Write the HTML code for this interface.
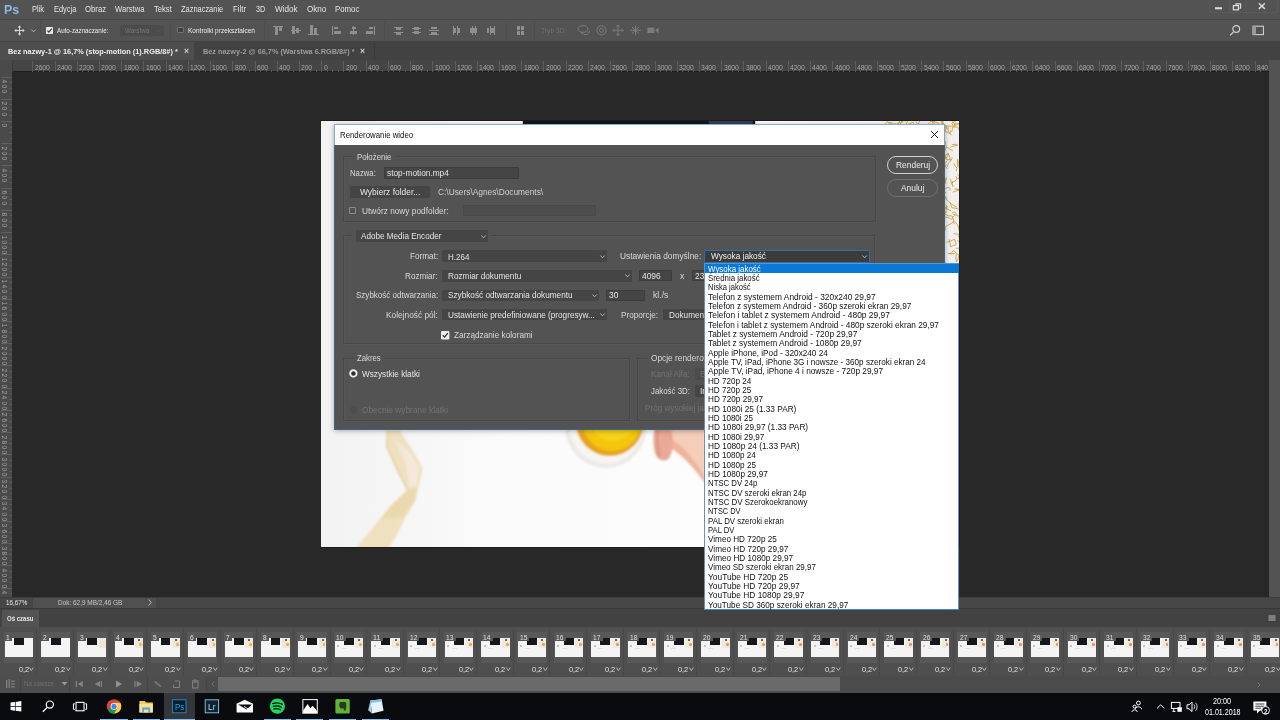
<!DOCTYPE html>
<html><head><meta charset="utf-8"><title>Photoshop</title>
<style>
html,body{margin:0;padding:0;}
body{width:1280px;height:720px;overflow:hidden;background:#282828;position:relative;font-family:"Liberation Sans",sans-serif;}
#app{position:absolute;left:0;top:0;width:1280px;height:720px;overflow:hidden;will-change:transform;}
.t{position:absolute;white-space:nowrap;line-height:12px;height:12px;font-family:"Liberation Sans",sans-serif;transform-origin:0 50%;}
.r{position:absolute;box-sizing:border-box;}
svg{position:absolute;overflow:visible;}
</style></head><body><div id="app">
<div class="r" style="left:0.00px;top:0.00px;width:1280.00px;height:720.00px;background:#282828;"></div>
<div class="r" style="left:0.00px;top:0.00px;width:1280.00px;height:19.00px;background:#535353;"></div>
<span class="t" style="left:4.20px;top:4px;font-size:12.5px;color:#8fb7e6;font-weight:bold;transform:scaleX(0.9876);">Ps</span>
<span class="t" style="left:31.80px;top:3px;font-size:8.6px;color:#e4e4e4;transform:scaleX(0.8731);">Plik</span>
<span class="t" style="left:53.70px;top:3px;font-size:8.6px;color:#e4e4e4;transform:scaleX(0.8639);">Edycja</span>
<span class="t" style="left:84.60px;top:3px;font-size:8.6px;color:#e4e4e4;transform:scaleX(0.9010);">Obraz</span>
<span class="t" style="left:115.20px;top:3px;font-size:8.6px;color:#e4e4e4;transform:scaleX(0.8875);">Warstwa</span>
<span class="t" style="left:153.50px;top:3px;font-size:8.6px;color:#e4e4e4;transform:scaleX(0.8868);">Tekst</span>
<span class="t" style="left:181.10px;top:3px;font-size:8.6px;color:#e4e4e4;transform:scaleX(0.8654);">Zaznaczanie</span>
<span class="t" style="left:233.10px;top:3px;font-size:8.6px;color:#e4e4e4;transform:scaleX(0.9073);">Filtr</span>
<span class="t" style="left:255.90px;top:3px;font-size:8.6px;color:#e4e4e4;transform:scaleX(0.8368);">3D</span>
<span class="t" style="left:274.60px;top:3px;font-size:8.6px;color:#e4e4e4;transform:scaleX(0.9458);">Widok</span>
<span class="t" style="left:306.70px;top:3px;font-size:8.6px;color:#e4e4e4;transform:scaleX(0.9389);">Okno</span>
<span class="t" style="left:334.90px;top:3px;font-size:8.6px;color:#e4e4e4;transform:scaleX(0.9116);">Pomoc</span>
<svg style="left:1200px;top:0" width="80" height="19" viewBox="0 0 80 19"><path d="M9.4 0 V10.5 Q9.4 12.5 11.4 12.5 H75.8 Q77.8 12.5 77.8 10.5 V0 M29.4 0 V12.5 M46 0 V12.5" fill="none" stroke="#5e5e5e" stroke-width="0.7"/><rect x="15" y="7.2" width="7" height="2.1" fill="#d9d9d9"/><rect x="33.4" y="5.6" width="5" height="4.2" fill="none" stroke="#d9d9d9" stroke-width="1.3"/><path d="M36 4.9 V3.9 H40.6 V8.2 H39.4" fill="none" stroke="#d9d9d9" stroke-width="1.2"/><path d="M58.8 3.3 L64.9 8.9 M64.9 3.3 L58.8 8.9" stroke="#d9d9d9" stroke-width="1.5" fill="none"/></svg>
<div class="r" style="left:0.00px;top:19.00px;width:1280.00px;height:22.30px;background:#535353;"></div>
<div class="r" style="left:0.00px;top:18.60px;width:1280.00px;height:1.00px;background:#474747;"></div>
<div class="r" style="left:0.00px;top:40.60px;width:1280.00px;height:1.00px;background:#3d3d3d;"></div>
<svg style="left:14px;top:24.8px" width="11" height="11" viewBox="0 0 11 11"><path d="M5.5 0.3 L7.3 2.4 H6 V5 H8.6 V3.7 L10.7 5.5 L8.6 7.3 V6 H6 V8.6 H7.3 L5.5 10.7 L3.7 8.6 H5 V6 H2.4 V7.3 L0.3 5.5 L2.4 3.7 V5 H5 V2.4 H3.7 Z" fill="#d8d8d8"/></svg>
<svg style="left:30.8px;top:29px" width="5" height="4" viewBox="0 0 5 4"><path d="M0.3 0.6 L2.5 2.9 L4.7 0.6" fill="none" stroke="#bdbdbd" stroke-width="0.9"/></svg>
<div class="r" style="left:40.20px;top:22.00px;width:1.00px;height:17.00px;background:#4c4c4c;"></div>
<svg style="left:46.2px;top:26.6px" width="7" height="7" viewBox="0 0 7 7"><rect width="7" height="7" rx="0.8" fill="#e8e8e8"/><path d="M1.4 3.6 L2.9 5.1 L5.7 1.7" fill="none" stroke="#333" stroke-width="1.2"/></svg>
<span class="t" style="left:57.00px;top:25px;font-size:7.8px;color:#ececec;transform:scaleX(0.8010);">Auto-zaznaczanie:</span>
<div class="r" style="left:120.00px;top:24.50px;width:44.00px;height:11.80px;background:#4b4b4b;border-radius:1px;"></div>
<span class="t" style="left:125.00px;top:25px;font-size:7.6px;color:#777;transform:scaleX(0.8300);">Warstwa</span>
<svg style="left:155.5px;top:29px" width="5" height="4" viewBox="0 0 5 4"><path d="M0.3 0.6 L2.5 2.9 L4.7 0.6" fill="none" stroke="#5e5e5e" stroke-width="0.9"/></svg>
<div class="r" style="left:170.40px;top:22.00px;width:1.00px;height:17.00px;background:#4c4c4c;"></div>
<div class="r" style="left:177.30px;top:26.80px;width:6.60px;height:6.60px;background:#404040;border:0.8px solid #727272;border-radius:1px;"></div>
<span class="t" style="left:187.60px;top:25px;font-size:7.8px;color:#ececec;transform:scaleX(0.8341);">Kontrolki przekształceń</span>
<div class="r" style="left:264.20px;top:22.00px;width:1.00px;height:17.00px;background:#4c4c4c;"></div>
<div class="r" style="left:273.40px;top:25.70px;width:10.10px;height:0.90px;background:#8f8f8f;"></div>
<div class="r" style="left:275.00px;top:26.90px;width:3.20px;height:7.80px;background:#8f8f8f;"></div>
<div class="r" style="left:279.40px;top:26.90px;width:2.80px;height:4.60px;background:#8f8f8f;"></div>
<div class="r" style="left:290.60px;top:29.90px;width:10.40px;height:0.80px;background:#8f8f8f;"></div>
<div class="r" style="left:292.20px;top:26.30px;width:3.00px;height:8.20px;background:#8f8f8f;"></div>
<div class="r" style="left:296.40px;top:27.90px;width:2.80px;height:5.00px;background:#8f8f8f;"></div>
<div class="r" style="left:308.20px;top:33.90px;width:10.40px;height:0.80px;background:#8f8f8f;"></div>
<div class="r" style="left:310.20px;top:25.30px;width:2.80px;height:8.40px;background:#8f8f8f;"></div>
<div class="r" style="left:314.20px;top:28.30px;width:2.80px;height:5.40px;background:#8f8f8f;"></div>
<div class="r" style="left:332.20px;top:25.70px;width:1.00px;height:9.20px;background:#8f8f8f;"></div>
<div class="r" style="left:333.60px;top:26.90px;width:4.20px;height:2.50px;background:#8f8f8f;"></div>
<div class="r" style="left:333.60px;top:31.20px;width:7.10px;height:2.50px;background:#8f8f8f;"></div>
<div class="r" style="left:353.30px;top:25.70px;width:1.00px;height:9.20px;background:#8f8f8f;"></div>
<div class="r" style="left:351.60px;top:26.90px;width:4.40px;height:2.50px;background:#8f8f8f;"></div>
<div class="r" style="left:350.20px;top:31.20px;width:7.20px;height:2.50px;background:#8f8f8f;"></div>
<div class="r" style="left:373.80px;top:25.70px;width:1.00px;height:9.20px;background:#8f8f8f;"></div>
<div class="r" style="left:369.20px;top:26.90px;width:4.20px;height:2.50px;background:#8f8f8f;"></div>
<div class="r" style="left:365.60px;top:31.20px;width:7.80px;height:2.50px;background:#8f8f8f;"></div>
<div class="r" style="left:393.50px;top:26.70px;width:9.90px;height:0.80px;background:#8f8f8f;"></div>
<div class="r" style="left:393.50px;top:31.50px;width:9.90px;height:0.80px;background:#8f8f8f;"></div>
<div class="r" style="left:395.90px;top:27.70px;width:5.10px;height:2.20px;background:#8f8f8f;"></div>
<div class="r" style="left:395.90px;top:32.50px;width:5.10px;height:2.00px;background:#8f8f8f;"></div>
<div class="r" style="left:411.60px;top:27.90px;width:9.80px;height:0.80px;background:#8f8f8f;"></div>
<div class="r" style="left:411.60px;top:32.30px;width:9.80px;height:0.80px;background:#8f8f8f;"></div>
<div class="r" style="left:414.00px;top:26.50px;width:5.00px;height:3.40px;background:#8f8f8f;"></div>
<div class="r" style="left:414.00px;top:31.10px;width:5.00px;height:3.40px;background:#8f8f8f;"></div>
<div class="r" style="left:429.00px;top:29.70px;width:10.10px;height:0.80px;background:#8f8f8f;"></div>
<div class="r" style="left:429.00px;top:33.90px;width:10.10px;height:0.80px;background:#8f8f8f;"></div>
<div class="r" style="left:431.40px;top:27.30px;width:5.30px;height:2.20px;background:#8f8f8f;"></div>
<div class="r" style="left:431.40px;top:31.50px;width:5.30px;height:2.20px;background:#8f8f8f;"></div>
<div class="r" style="left:452.90px;top:25.90px;width:0.90px;height:8.80px;background:#8f8f8f;"></div>
<div class="r" style="left:457.30px;top:25.90px;width:0.90px;height:8.80px;background:#8f8f8f;"></div>
<div class="r" style="left:454.00px;top:27.70px;width:2.30px;height:5.20px;background:#8f8f8f;"></div>
<div class="r" style="left:458.40px;top:27.70px;width:1.70px;height:5.20px;background:#8f8f8f;"></div>
<div class="r" style="left:471.60px;top:25.90px;width:0.90px;height:8.80px;background:#8f8f8f;"></div>
<div class="r" style="left:475.40px;top:25.90px;width:0.90px;height:8.80px;background:#8f8f8f;"></div>
<div class="r" style="left:470.00px;top:27.70px;width:3.60px;height:5.20px;background:#8f8f8f;"></div>
<div class="r" style="left:474.40px;top:27.70px;width:2.80px;height:5.20px;background:#8f8f8f;"></div>
<div class="r" style="left:489.60px;top:25.90px;width:0.90px;height:8.80px;background:#8f8f8f;"></div>
<div class="r" style="left:494.00px;top:25.90px;width:0.90px;height:8.80px;background:#8f8f8f;"></div>
<div class="r" style="left:487.00px;top:27.70px;width:2.40px;height:5.20px;background:#8f8f8f;"></div>
<div class="r" style="left:491.20px;top:27.70px;width:2.60px;height:5.20px;background:#8f8f8f;"></div>
<div class="r" style="left:516.60px;top:25.90px;width:3.20px;height:3.80px;background:#8f8f8f;"></div>
<div class="r" style="left:520.80px;top:25.90px;width:3.30px;height:3.80px;background:#8f8f8f;"></div>
<div class="r" style="left:516.60px;top:30.70px;width:3.20px;height:4.00px;background:#8f8f8f;"></div>
<div class="r" style="left:520.80px;top:30.70px;width:3.30px;height:4.00px;background:#8f8f8f;"></div>
<div class="r" style="left:384.30px;top:22.00px;width:1.00px;height:17.00px;background:#4c4c4c;"></div>
<div class="r" style="left:505.60px;top:22.00px;width:1.00px;height:17.00px;background:#4c4c4c;"></div>
<div class="r" style="left:533.60px;top:22.00px;width:1.00px;height:17.00px;background:#4c4c4c;"></div>
<span class="t" style="left:541.20px;top:25px;font-size:7.6px;color:#707070;transform:scaleX(0.8871);">Tryb 3D:</span>
<svg style="left:576px;top:23px" width="86" height="15" viewBox="0 0 86 15"><g fill="none" stroke="#7c7c7c" stroke-width="1"><ellipse cx="7" cy="6" rx="5" ry="3.4"/><path d="M5 9.5 C8 13 13 12 13.5 8"/><circle cx="25.5" cy="7.3" r="4.6"/><circle cx="25.5" cy="7.3" r="2"/><path d="M42 2 V12.6 M36.8 7.3 H47.4 M40.4 3.6 L42 2 L43.6 3.6 M40.4 11 L42 12.6 L43.6 11 M38.4 5.7 L36.8 7.3 L38.4 8.9 M45.8 5.7 L47.4 7.3 L45.8 8.9"/><path d="M59.5 2.5 V12 M54 7.3 H65 M56 4 L63 10.6 M63 4 L56 10.6"/></g><rect x="71.4" y="4.6" width="7" height="5.4" fill="#7c7c7c"/><path d="M79 7.3 L82.6 4.4 V10.2 Z" fill="#7c7c7c"/></svg>
<svg style="left:1228px;top:23px" width="40" height="15" viewBox="0 0 40 15"><circle cx="8.2" cy="6" r="3.4" fill="none" stroke="#cfcfcf" stroke-width="1.2"/><path d="M5.8 8.6 L2.2 12.2" stroke="#cfcfcf" stroke-width="1.3"/><rect x="25" y="3.2" width="10.4" height="8.4" fill="none" stroke="#cfcfcf" stroke-width="1.1"/><rect x="25" y="3.2" width="3" height="8.4" fill="#9a9a9a"/></svg>
<div class="r" style="left:0.00px;top:41.40px;width:1280.00px;height:18.80px;background:#424242;"></div>
<div class="r" style="left:0.00px;top:42.00px;width:194.40px;height:18.20px;background:#4e4e4e;"></div>
<span class="t" style="left:7.50px;top:46px;font-size:7.4px;color:#efefef;font-weight:bold;transform:scaleX(0.9949);">Bez nazwy-1 @ 16,7% (stop-motion (1).RGB/8#) *</span>
<span class="t" style="left:183.60px;top:45px;font-size:8.5px;color:#cfcfcf;font-weight:bold;transform:scaleX(1.0073);">×</span>
<span class="t" style="left:203.00px;top:46px;font-size:7.4px;color:#9c9c9c;font-weight:bold;transform:scaleX(0.9892);">Bez nazwy-2 @ 66,7% (Warstwa 6.RGB/8#) *</span>
<span class="t" style="left:360.00px;top:45px;font-size:8.5px;color:#cfcfcf;font-weight:bold;transform:scaleX(1.0073);">×</span>
<div class="r" style="left:373.60px;top:43.00px;width:0.80px;height:17.00px;background:#3a3a3a;"></div>
<div class="r" style="left:0.00px;top:60.20px;width:1280.00px;height:11.80px;background:#454545;"></div>
<div class="r" style="left:0.00px;top:72.00px;width:12.20px;height:525.00px;background:#4a4a4a;"></div>
<div class="r" style="left:1268.60px;top:60.20px;width:11.40px;height:536.80px;background:#535353;"></div>
<div class="r" style="left:12.20px;top:71.40px;width:1256.40px;height:0.80px;background:#1e1e1e;"></div>
<div class="r" style="left:32.31px;top:60.60px;width:0.80px;height:11.00px;background:#5c5c5c;"></div>
<div class="r" style="left:37.87px;top:69.60px;width:0.70px;height:2.00px;background:#585858;"></div>
<div class="r" style="left:43.42px;top:69.00px;width:0.70px;height:2.60px;background:#585858;"></div>
<div class="r" style="left:48.98px;top:69.60px;width:0.70px;height:2.00px;background:#585858;"></div>
<span class="t" style="left:34.71px;top:62px;font-size:7.0px;color:#a6a6a6;transform:scaleX(0.9700);letter-spacing:-0.1px;">2600</span>
<div class="r" style="left:54.54px;top:60.60px;width:0.80px;height:11.00px;background:#5c5c5c;"></div>
<div class="r" style="left:60.09px;top:69.60px;width:0.70px;height:2.00px;background:#585858;"></div>
<div class="r" style="left:65.65px;top:69.00px;width:0.70px;height:2.60px;background:#585858;"></div>
<div class="r" style="left:71.20px;top:69.60px;width:0.70px;height:2.00px;background:#585858;"></div>
<span class="t" style="left:56.94px;top:62px;font-size:7.0px;color:#a6a6a6;transform:scaleX(0.9700);letter-spacing:-0.1px;">2400</span>
<div class="r" style="left:76.76px;top:60.60px;width:0.80px;height:11.00px;background:#5c5c5c;"></div>
<div class="r" style="left:82.31px;top:69.60px;width:0.70px;height:2.00px;background:#585858;"></div>
<div class="r" style="left:87.87px;top:69.00px;width:0.70px;height:2.60px;background:#585858;"></div>
<div class="r" style="left:93.42px;top:69.60px;width:0.70px;height:2.00px;background:#585858;"></div>
<span class="t" style="left:79.16px;top:62px;font-size:7.0px;color:#a6a6a6;transform:scaleX(0.9700);letter-spacing:-0.1px;">2200</span>
<div class="r" style="left:98.98px;top:60.60px;width:0.80px;height:11.00px;background:#5c5c5c;"></div>
<div class="r" style="left:104.54px;top:69.60px;width:0.70px;height:2.00px;background:#585858;"></div>
<div class="r" style="left:110.09px;top:69.00px;width:0.70px;height:2.60px;background:#585858;"></div>
<div class="r" style="left:115.65px;top:69.60px;width:0.70px;height:2.00px;background:#585858;"></div>
<span class="t" style="left:101.38px;top:62px;font-size:7.0px;color:#a6a6a6;transform:scaleX(0.9700);letter-spacing:-0.1px;">2000</span>
<div class="r" style="left:121.20px;top:60.60px;width:0.80px;height:11.00px;background:#5c5c5c;"></div>
<div class="r" style="left:126.76px;top:69.60px;width:0.70px;height:2.00px;background:#585858;"></div>
<div class="r" style="left:132.31px;top:69.00px;width:0.70px;height:2.60px;background:#585858;"></div>
<div class="r" style="left:137.87px;top:69.60px;width:0.70px;height:2.00px;background:#585858;"></div>
<span class="t" style="left:123.60px;top:62px;font-size:7.0px;color:#a6a6a6;transform:scaleX(0.9700);letter-spacing:-0.1px;">1800</span>
<div class="r" style="left:143.42px;top:60.60px;width:0.80px;height:11.00px;background:#5c5c5c;"></div>
<div class="r" style="left:148.98px;top:69.60px;width:0.70px;height:2.00px;background:#585858;"></div>
<div class="r" style="left:154.53px;top:69.00px;width:0.70px;height:2.60px;background:#585858;"></div>
<div class="r" style="left:160.09px;top:69.60px;width:0.70px;height:2.00px;background:#585858;"></div>
<span class="t" style="left:145.82px;top:62px;font-size:7.0px;color:#a6a6a6;transform:scaleX(0.9700);letter-spacing:-0.1px;">1600</span>
<div class="r" style="left:165.65px;top:60.60px;width:0.80px;height:11.00px;background:#5c5c5c;"></div>
<div class="r" style="left:171.20px;top:69.60px;width:0.70px;height:2.00px;background:#585858;"></div>
<div class="r" style="left:176.76px;top:69.00px;width:0.70px;height:2.60px;background:#585858;"></div>
<div class="r" style="left:182.31px;top:69.60px;width:0.70px;height:2.00px;background:#585858;"></div>
<span class="t" style="left:168.05px;top:62px;font-size:7.0px;color:#a6a6a6;transform:scaleX(0.9700);letter-spacing:-0.1px;">1400</span>
<div class="r" style="left:187.87px;top:60.60px;width:0.80px;height:11.00px;background:#5c5c5c;"></div>
<div class="r" style="left:193.42px;top:69.60px;width:0.70px;height:2.00px;background:#585858;"></div>
<div class="r" style="left:198.98px;top:69.00px;width:0.70px;height:2.60px;background:#585858;"></div>
<div class="r" style="left:204.53px;top:69.60px;width:0.70px;height:2.00px;background:#585858;"></div>
<span class="t" style="left:190.27px;top:62px;font-size:7.0px;color:#a6a6a6;transform:scaleX(0.9700);letter-spacing:-0.1px;">1200</span>
<div class="r" style="left:210.09px;top:60.60px;width:0.80px;height:11.00px;background:#5c5c5c;"></div>
<div class="r" style="left:215.65px;top:69.60px;width:0.70px;height:2.00px;background:#585858;"></div>
<div class="r" style="left:221.20px;top:69.00px;width:0.70px;height:2.60px;background:#585858;"></div>
<div class="r" style="left:226.76px;top:69.60px;width:0.70px;height:2.00px;background:#585858;"></div>
<span class="t" style="left:212.49px;top:62px;font-size:7.0px;color:#a6a6a6;transform:scaleX(0.9700);letter-spacing:-0.1px;">1000</span>
<div class="r" style="left:232.31px;top:60.60px;width:0.80px;height:11.00px;background:#5c5c5c;"></div>
<div class="r" style="left:237.87px;top:69.60px;width:0.70px;height:2.00px;background:#585858;"></div>
<div class="r" style="left:243.42px;top:69.00px;width:0.70px;height:2.60px;background:#585858;"></div>
<div class="r" style="left:248.98px;top:69.60px;width:0.70px;height:2.00px;background:#585858;"></div>
<span class="t" style="left:234.71px;top:62px;font-size:7.0px;color:#a6a6a6;transform:scaleX(0.9700);letter-spacing:-0.1px;">800</span>
<div class="r" style="left:254.53px;top:60.60px;width:0.80px;height:11.00px;background:#5c5c5c;"></div>
<div class="r" style="left:260.09px;top:69.60px;width:0.70px;height:2.00px;background:#585858;"></div>
<div class="r" style="left:265.64px;top:69.00px;width:0.70px;height:2.60px;background:#585858;"></div>
<div class="r" style="left:271.20px;top:69.60px;width:0.70px;height:2.00px;background:#585858;"></div>
<span class="t" style="left:256.93px;top:62px;font-size:7.0px;color:#a6a6a6;transform:scaleX(0.9700);letter-spacing:-0.1px;">600</span>
<div class="r" style="left:276.76px;top:60.60px;width:0.80px;height:11.00px;background:#5c5c5c;"></div>
<div class="r" style="left:282.31px;top:69.60px;width:0.70px;height:2.00px;background:#585858;"></div>
<div class="r" style="left:287.87px;top:69.00px;width:0.70px;height:2.60px;background:#585858;"></div>
<div class="r" style="left:293.42px;top:69.60px;width:0.70px;height:2.00px;background:#585858;"></div>
<span class="t" style="left:279.16px;top:62px;font-size:7.0px;color:#a6a6a6;transform:scaleX(0.9700);letter-spacing:-0.1px;">400</span>
<div class="r" style="left:298.98px;top:60.60px;width:0.80px;height:11.00px;background:#5c5c5c;"></div>
<div class="r" style="left:304.53px;top:69.60px;width:0.70px;height:2.00px;background:#585858;"></div>
<div class="r" style="left:310.09px;top:69.00px;width:0.70px;height:2.60px;background:#585858;"></div>
<div class="r" style="left:315.64px;top:69.60px;width:0.70px;height:2.00px;background:#585858;"></div>
<span class="t" style="left:301.38px;top:62px;font-size:7.0px;color:#a6a6a6;transform:scaleX(0.9700);letter-spacing:-0.1px;">200</span>
<div class="r" style="left:321.20px;top:60.60px;width:0.80px;height:11.00px;background:#5c5c5c;"></div>
<div class="r" style="left:326.76px;top:69.60px;width:0.70px;height:2.00px;background:#585858;"></div>
<div class="r" style="left:332.31px;top:69.00px;width:0.70px;height:2.60px;background:#585858;"></div>
<div class="r" style="left:337.87px;top:69.60px;width:0.70px;height:2.00px;background:#585858;"></div>
<span class="t" style="left:323.60px;top:62px;font-size:7.0px;color:#a6a6a6;transform:scaleX(0.9700);letter-spacing:-0.1px;">0</span>
<div class="r" style="left:343.42px;top:60.60px;width:0.80px;height:11.00px;background:#5c5c5c;"></div>
<div class="r" style="left:348.98px;top:69.60px;width:0.70px;height:2.00px;background:#585858;"></div>
<div class="r" style="left:354.53px;top:69.00px;width:0.70px;height:2.60px;background:#585858;"></div>
<div class="r" style="left:360.09px;top:69.60px;width:0.70px;height:2.00px;background:#585858;"></div>
<span class="t" style="left:345.82px;top:62px;font-size:7.0px;color:#a6a6a6;transform:scaleX(0.9700);letter-spacing:-0.1px;">200</span>
<div class="r" style="left:365.64px;top:60.60px;width:0.80px;height:11.00px;background:#5c5c5c;"></div>
<div class="r" style="left:371.20px;top:69.60px;width:0.70px;height:2.00px;background:#585858;"></div>
<div class="r" style="left:376.75px;top:69.00px;width:0.70px;height:2.60px;background:#585858;"></div>
<div class="r" style="left:382.31px;top:69.60px;width:0.70px;height:2.00px;background:#585858;"></div>
<span class="t" style="left:368.04px;top:62px;font-size:7.0px;color:#a6a6a6;transform:scaleX(0.9700);letter-spacing:-0.1px;">400</span>
<div class="r" style="left:387.87px;top:60.60px;width:0.80px;height:11.00px;background:#5c5c5c;"></div>
<div class="r" style="left:393.42px;top:69.60px;width:0.70px;height:2.00px;background:#585858;"></div>
<div class="r" style="left:398.98px;top:69.00px;width:0.70px;height:2.60px;background:#585858;"></div>
<div class="r" style="left:404.53px;top:69.60px;width:0.70px;height:2.00px;background:#585858;"></div>
<span class="t" style="left:390.27px;top:62px;font-size:7.0px;color:#a6a6a6;transform:scaleX(0.9700);letter-spacing:-0.1px;">600</span>
<div class="r" style="left:410.09px;top:60.60px;width:0.80px;height:11.00px;background:#5c5c5c;"></div>
<div class="r" style="left:415.64px;top:69.60px;width:0.70px;height:2.00px;background:#585858;"></div>
<div class="r" style="left:421.20px;top:69.00px;width:0.70px;height:2.60px;background:#585858;"></div>
<div class="r" style="left:426.75px;top:69.60px;width:0.70px;height:2.00px;background:#585858;"></div>
<span class="t" style="left:412.49px;top:62px;font-size:7.0px;color:#a6a6a6;transform:scaleX(0.9700);letter-spacing:-0.1px;">800</span>
<div class="r" style="left:432.31px;top:60.60px;width:0.80px;height:11.00px;background:#5c5c5c;"></div>
<div class="r" style="left:437.87px;top:69.60px;width:0.70px;height:2.00px;background:#585858;"></div>
<div class="r" style="left:443.42px;top:69.00px;width:0.70px;height:2.60px;background:#585858;"></div>
<div class="r" style="left:448.98px;top:69.60px;width:0.70px;height:2.00px;background:#585858;"></div>
<span class="t" style="left:434.71px;top:62px;font-size:7.0px;color:#a6a6a6;transform:scaleX(0.9700);letter-spacing:-0.1px;">1000</span>
<div class="r" style="left:454.53px;top:60.60px;width:0.80px;height:11.00px;background:#5c5c5c;"></div>
<div class="r" style="left:460.09px;top:69.60px;width:0.70px;height:2.00px;background:#585858;"></div>
<div class="r" style="left:465.64px;top:69.00px;width:0.70px;height:2.60px;background:#585858;"></div>
<div class="r" style="left:471.20px;top:69.60px;width:0.70px;height:2.00px;background:#585858;"></div>
<span class="t" style="left:456.93px;top:62px;font-size:7.0px;color:#a6a6a6;transform:scaleX(0.9700);letter-spacing:-0.1px;">1200</span>
<div class="r" style="left:476.75px;top:60.60px;width:0.80px;height:11.00px;background:#5c5c5c;"></div>
<div class="r" style="left:482.31px;top:69.60px;width:0.70px;height:2.00px;background:#585858;"></div>
<div class="r" style="left:487.87px;top:69.00px;width:0.70px;height:2.60px;background:#585858;"></div>
<div class="r" style="left:493.42px;top:69.60px;width:0.70px;height:2.00px;background:#585858;"></div>
<span class="t" style="left:479.15px;top:62px;font-size:7.0px;color:#a6a6a6;transform:scaleX(0.9700);letter-spacing:-0.1px;">1400</span>
<div class="r" style="left:498.98px;top:60.60px;width:0.80px;height:11.00px;background:#5c5c5c;"></div>
<div class="r" style="left:504.53px;top:69.60px;width:0.70px;height:2.00px;background:#585858;"></div>
<div class="r" style="left:510.09px;top:69.00px;width:0.70px;height:2.60px;background:#585858;"></div>
<div class="r" style="left:515.64px;top:69.60px;width:0.70px;height:2.00px;background:#585858;"></div>
<span class="t" style="left:501.38px;top:62px;font-size:7.0px;color:#a6a6a6;transform:scaleX(0.9700);letter-spacing:-0.1px;">1600</span>
<div class="r" style="left:521.20px;top:60.60px;width:0.80px;height:11.00px;background:#5c5c5c;"></div>
<div class="r" style="left:526.75px;top:69.60px;width:0.70px;height:2.00px;background:#585858;"></div>
<div class="r" style="left:532.31px;top:69.00px;width:0.70px;height:2.60px;background:#585858;"></div>
<div class="r" style="left:537.86px;top:69.60px;width:0.70px;height:2.00px;background:#585858;"></div>
<span class="t" style="left:523.60px;top:62px;font-size:7.0px;color:#a6a6a6;transform:scaleX(0.9700);letter-spacing:-0.1px;">1800</span>
<div class="r" style="left:543.42px;top:60.60px;width:0.80px;height:11.00px;background:#5c5c5c;"></div>
<div class="r" style="left:548.98px;top:69.60px;width:0.70px;height:2.00px;background:#585858;"></div>
<div class="r" style="left:554.53px;top:69.00px;width:0.70px;height:2.60px;background:#585858;"></div>
<div class="r" style="left:560.09px;top:69.60px;width:0.70px;height:2.00px;background:#585858;"></div>
<span class="t" style="left:545.82px;top:62px;font-size:7.0px;color:#a6a6a6;transform:scaleX(0.9700);letter-spacing:-0.1px;">2000</span>
<div class="r" style="left:565.64px;top:60.60px;width:0.80px;height:11.00px;background:#5c5c5c;"></div>
<div class="r" style="left:571.20px;top:69.60px;width:0.70px;height:2.00px;background:#585858;"></div>
<div class="r" style="left:576.75px;top:69.00px;width:0.70px;height:2.60px;background:#585858;"></div>
<div class="r" style="left:582.31px;top:69.60px;width:0.70px;height:2.00px;background:#585858;"></div>
<span class="t" style="left:568.04px;top:62px;font-size:7.0px;color:#a6a6a6;transform:scaleX(0.9700);letter-spacing:-0.1px;">2200</span>
<div class="r" style="left:587.86px;top:60.60px;width:0.80px;height:11.00px;background:#5c5c5c;"></div>
<div class="r" style="left:593.42px;top:69.60px;width:0.70px;height:2.00px;background:#585858;"></div>
<div class="r" style="left:598.98px;top:69.00px;width:0.70px;height:2.60px;background:#585858;"></div>
<div class="r" style="left:604.53px;top:69.60px;width:0.70px;height:2.00px;background:#585858;"></div>
<span class="t" style="left:590.26px;top:62px;font-size:7.0px;color:#a6a6a6;transform:scaleX(0.9700);letter-spacing:-0.1px;">2400</span>
<div class="r" style="left:610.09px;top:60.60px;width:0.80px;height:11.00px;background:#5c5c5c;"></div>
<div class="r" style="left:615.64px;top:69.60px;width:0.70px;height:2.00px;background:#585858;"></div>
<div class="r" style="left:621.20px;top:69.00px;width:0.70px;height:2.60px;background:#585858;"></div>
<div class="r" style="left:626.75px;top:69.60px;width:0.70px;height:2.00px;background:#585858;"></div>
<span class="t" style="left:612.49px;top:62px;font-size:7.0px;color:#a6a6a6;transform:scaleX(0.9700);letter-spacing:-0.1px;">2600</span>
<div class="r" style="left:632.31px;top:60.60px;width:0.80px;height:11.00px;background:#5c5c5c;"></div>
<div class="r" style="left:637.86px;top:69.60px;width:0.70px;height:2.00px;background:#585858;"></div>
<div class="r" style="left:643.42px;top:69.00px;width:0.70px;height:2.60px;background:#585858;"></div>
<div class="r" style="left:648.97px;top:69.60px;width:0.70px;height:2.00px;background:#585858;"></div>
<span class="t" style="left:634.71px;top:62px;font-size:7.0px;color:#a6a6a6;transform:scaleX(0.9700);letter-spacing:-0.1px;">2800</span>
<div class="r" style="left:654.53px;top:60.60px;width:0.80px;height:11.00px;background:#5c5c5c;"></div>
<div class="r" style="left:660.09px;top:69.60px;width:0.70px;height:2.00px;background:#585858;"></div>
<div class="r" style="left:665.64px;top:69.00px;width:0.70px;height:2.60px;background:#585858;"></div>
<div class="r" style="left:671.20px;top:69.60px;width:0.70px;height:2.00px;background:#585858;"></div>
<span class="t" style="left:656.93px;top:62px;font-size:7.0px;color:#a6a6a6;transform:scaleX(0.9700);letter-spacing:-0.1px;">3000</span>
<div class="r" style="left:676.75px;top:60.60px;width:0.80px;height:11.00px;background:#5c5c5c;"></div>
<div class="r" style="left:682.31px;top:69.60px;width:0.70px;height:2.00px;background:#585858;"></div>
<div class="r" style="left:687.86px;top:69.00px;width:0.70px;height:2.60px;background:#585858;"></div>
<div class="r" style="left:693.42px;top:69.60px;width:0.70px;height:2.00px;background:#585858;"></div>
<span class="t" style="left:679.15px;top:62px;font-size:7.0px;color:#a6a6a6;transform:scaleX(0.9700);letter-spacing:-0.1px;">3200</span>
<div class="r" style="left:698.97px;top:60.60px;width:0.80px;height:11.00px;background:#5c5c5c;"></div>
<div class="r" style="left:704.53px;top:69.60px;width:0.70px;height:2.00px;background:#585858;"></div>
<div class="r" style="left:710.08px;top:69.00px;width:0.70px;height:2.60px;background:#585858;"></div>
<div class="r" style="left:715.64px;top:69.60px;width:0.70px;height:2.00px;background:#585858;"></div>
<span class="t" style="left:701.37px;top:62px;font-size:7.0px;color:#a6a6a6;transform:scaleX(0.9700);letter-spacing:-0.1px;">3400</span>
<div class="r" style="left:721.20px;top:60.60px;width:0.80px;height:11.00px;background:#5c5c5c;"></div>
<div class="r" style="left:726.75px;top:69.60px;width:0.70px;height:2.00px;background:#585858;"></div>
<div class="r" style="left:732.31px;top:69.00px;width:0.70px;height:2.60px;background:#585858;"></div>
<div class="r" style="left:737.86px;top:69.60px;width:0.70px;height:2.00px;background:#585858;"></div>
<span class="t" style="left:723.60px;top:62px;font-size:7.0px;color:#a6a6a6;transform:scaleX(0.9700);letter-spacing:-0.1px;">3600</span>
<div class="r" style="left:743.42px;top:60.60px;width:0.80px;height:11.00px;background:#5c5c5c;"></div>
<div class="r" style="left:748.97px;top:69.60px;width:0.70px;height:2.00px;background:#585858;"></div>
<div class="r" style="left:754.53px;top:69.00px;width:0.70px;height:2.60px;background:#585858;"></div>
<div class="r" style="left:760.08px;top:69.60px;width:0.70px;height:2.00px;background:#585858;"></div>
<span class="t" style="left:745.82px;top:62px;font-size:7.0px;color:#a6a6a6;transform:scaleX(0.9700);letter-spacing:-0.1px;">3800</span>
<div class="r" style="left:765.64px;top:60.60px;width:0.80px;height:11.00px;background:#5c5c5c;"></div>
<div class="r" style="left:771.20px;top:69.60px;width:0.70px;height:2.00px;background:#585858;"></div>
<div class="r" style="left:776.75px;top:69.00px;width:0.70px;height:2.60px;background:#585858;"></div>
<div class="r" style="left:782.31px;top:69.60px;width:0.70px;height:2.00px;background:#585858;"></div>
<span class="t" style="left:768.04px;top:62px;font-size:7.0px;color:#a6a6a6;transform:scaleX(0.9700);letter-spacing:-0.1px;">4000</span>
<div class="r" style="left:787.86px;top:60.60px;width:0.80px;height:11.00px;background:#5c5c5c;"></div>
<div class="r" style="left:793.42px;top:69.60px;width:0.70px;height:2.00px;background:#585858;"></div>
<div class="r" style="left:798.97px;top:69.00px;width:0.70px;height:2.60px;background:#585858;"></div>
<div class="r" style="left:804.53px;top:69.60px;width:0.70px;height:2.00px;background:#585858;"></div>
<span class="t" style="left:790.26px;top:62px;font-size:7.0px;color:#a6a6a6;transform:scaleX(0.9700);letter-spacing:-0.1px;">4200</span>
<div class="r" style="left:810.08px;top:60.60px;width:0.80px;height:11.00px;background:#5c5c5c;"></div>
<div class="r" style="left:815.64px;top:69.60px;width:0.70px;height:2.00px;background:#585858;"></div>
<div class="r" style="left:821.20px;top:69.00px;width:0.70px;height:2.60px;background:#585858;"></div>
<div class="r" style="left:826.75px;top:69.60px;width:0.70px;height:2.00px;background:#585858;"></div>
<span class="t" style="left:812.48px;top:62px;font-size:7.0px;color:#a6a6a6;transform:scaleX(0.9700);letter-spacing:-0.1px;">4400</span>
<div class="r" style="left:832.31px;top:60.60px;width:0.80px;height:11.00px;background:#5c5c5c;"></div>
<div class="r" style="left:837.86px;top:69.60px;width:0.70px;height:2.00px;background:#585858;"></div>
<div class="r" style="left:843.42px;top:69.00px;width:0.70px;height:2.60px;background:#585858;"></div>
<div class="r" style="left:848.97px;top:69.60px;width:0.70px;height:2.00px;background:#585858;"></div>
<span class="t" style="left:834.71px;top:62px;font-size:7.0px;color:#a6a6a6;transform:scaleX(0.9700);letter-spacing:-0.1px;">4600</span>
<div class="r" style="left:854.53px;top:60.60px;width:0.80px;height:11.00px;background:#5c5c5c;"></div>
<div class="r" style="left:860.08px;top:69.60px;width:0.70px;height:2.00px;background:#585858;"></div>
<div class="r" style="left:865.64px;top:69.00px;width:0.70px;height:2.60px;background:#585858;"></div>
<div class="r" style="left:871.19px;top:69.60px;width:0.70px;height:2.00px;background:#585858;"></div>
<span class="t" style="left:856.93px;top:62px;font-size:7.0px;color:#a6a6a6;transform:scaleX(0.9700);letter-spacing:-0.1px;">4800</span>
<div class="r" style="left:876.75px;top:60.60px;width:0.80px;height:11.00px;background:#5c5c5c;"></div>
<div class="r" style="left:882.31px;top:69.60px;width:0.70px;height:2.00px;background:#585858;"></div>
<div class="r" style="left:887.86px;top:69.00px;width:0.70px;height:2.60px;background:#585858;"></div>
<div class="r" style="left:893.42px;top:69.60px;width:0.70px;height:2.00px;background:#585858;"></div>
<span class="t" style="left:879.15px;top:62px;font-size:7.0px;color:#a6a6a6;transform:scaleX(0.9700);letter-spacing:-0.1px;">5000</span>
<div class="r" style="left:898.97px;top:60.60px;width:0.80px;height:11.00px;background:#5c5c5c;"></div>
<div class="r" style="left:904.53px;top:69.60px;width:0.70px;height:2.00px;background:#585858;"></div>
<div class="r" style="left:910.08px;top:69.00px;width:0.70px;height:2.60px;background:#585858;"></div>
<div class="r" style="left:915.64px;top:69.60px;width:0.70px;height:2.00px;background:#585858;"></div>
<span class="t" style="left:901.37px;top:62px;font-size:7.0px;color:#a6a6a6;transform:scaleX(0.9700);letter-spacing:-0.1px;">5200</span>
<div class="r" style="left:921.19px;top:60.60px;width:0.80px;height:11.00px;background:#5c5c5c;"></div>
<div class="r" style="left:926.75px;top:69.60px;width:0.70px;height:2.00px;background:#585858;"></div>
<div class="r" style="left:932.30px;top:69.00px;width:0.70px;height:2.60px;background:#585858;"></div>
<div class="r" style="left:937.86px;top:69.60px;width:0.70px;height:2.00px;background:#585858;"></div>
<span class="t" style="left:923.59px;top:62px;font-size:7.0px;color:#a6a6a6;transform:scaleX(0.9700);letter-spacing:-0.1px;">5400</span>
<div class="r" style="left:943.42px;top:60.60px;width:0.80px;height:11.00px;background:#5c5c5c;"></div>
<div class="r" style="left:948.97px;top:69.60px;width:0.70px;height:2.00px;background:#585858;"></div>
<div class="r" style="left:954.53px;top:69.00px;width:0.70px;height:2.60px;background:#585858;"></div>
<div class="r" style="left:960.08px;top:69.60px;width:0.70px;height:2.00px;background:#585858;"></div>
<span class="t" style="left:945.82px;top:62px;font-size:7.0px;color:#a6a6a6;transform:scaleX(0.9700);letter-spacing:-0.1px;">5600</span>
<div class="r" style="left:965.64px;top:60.60px;width:0.80px;height:11.00px;background:#5c5c5c;"></div>
<div class="r" style="left:971.19px;top:69.60px;width:0.70px;height:2.00px;background:#585858;"></div>
<div class="r" style="left:976.75px;top:69.00px;width:0.70px;height:2.60px;background:#585858;"></div>
<div class="r" style="left:982.30px;top:69.60px;width:0.70px;height:2.00px;background:#585858;"></div>
<span class="t" style="left:968.04px;top:62px;font-size:7.0px;color:#a6a6a6;transform:scaleX(0.9700);letter-spacing:-0.1px;">5800</span>
<div class="r" style="left:987.86px;top:60.60px;width:0.80px;height:11.00px;background:#5c5c5c;"></div>
<div class="r" style="left:993.42px;top:69.60px;width:0.70px;height:2.00px;background:#585858;"></div>
<div class="r" style="left:998.97px;top:69.00px;width:0.70px;height:2.60px;background:#585858;"></div>
<div class="r" style="left:1004.53px;top:69.60px;width:0.70px;height:2.00px;background:#585858;"></div>
<span class="t" style="left:990.26px;top:62px;font-size:7.0px;color:#a6a6a6;transform:scaleX(0.9700);letter-spacing:-0.1px;">6000</span>
<div class="r" style="left:1010.08px;top:60.60px;width:0.80px;height:11.00px;background:#5c5c5c;"></div>
<div class="r" style="left:1015.64px;top:69.60px;width:0.70px;height:2.00px;background:#585858;"></div>
<div class="r" style="left:1021.19px;top:69.00px;width:0.70px;height:2.60px;background:#585858;"></div>
<div class="r" style="left:1026.75px;top:69.60px;width:0.70px;height:2.00px;background:#585858;"></div>
<span class="t" style="left:1012.48px;top:62px;font-size:7.0px;color:#a6a6a6;transform:scaleX(0.9700);letter-spacing:-0.1px;">6200</span>
<div class="r" style="left:1032.30px;top:60.60px;width:0.80px;height:11.00px;background:#5c5c5c;"></div>
<div class="r" style="left:1037.86px;top:69.60px;width:0.70px;height:2.00px;background:#585858;"></div>
<div class="r" style="left:1043.42px;top:69.00px;width:0.70px;height:2.60px;background:#585858;"></div>
<div class="r" style="left:1048.97px;top:69.60px;width:0.70px;height:2.00px;background:#585858;"></div>
<span class="t" style="left:1034.70px;top:62px;font-size:7.0px;color:#a6a6a6;transform:scaleX(0.9700);letter-spacing:-0.1px;">6400</span>
<div class="r" style="left:1054.53px;top:60.60px;width:0.80px;height:11.00px;background:#5c5c5c;"></div>
<div class="r" style="left:1060.08px;top:69.60px;width:0.70px;height:2.00px;background:#585858;"></div>
<div class="r" style="left:1065.64px;top:69.00px;width:0.70px;height:2.60px;background:#585858;"></div>
<div class="r" style="left:1071.19px;top:69.60px;width:0.70px;height:2.00px;background:#585858;"></div>
<span class="t" style="left:1056.93px;top:62px;font-size:7.0px;color:#a6a6a6;transform:scaleX(0.9700);letter-spacing:-0.1px;">6600</span>
<div class="r" style="left:1076.75px;top:60.60px;width:0.80px;height:11.00px;background:#5c5c5c;"></div>
<div class="r" style="left:1082.30px;top:69.60px;width:0.70px;height:2.00px;background:#585858;"></div>
<div class="r" style="left:1087.86px;top:69.00px;width:0.70px;height:2.60px;background:#585858;"></div>
<div class="r" style="left:1093.41px;top:69.60px;width:0.70px;height:2.00px;background:#585858;"></div>
<span class="t" style="left:1079.15px;top:62px;font-size:7.0px;color:#a6a6a6;transform:scaleX(0.9700);letter-spacing:-0.1px;">6800</span>
<div class="r" style="left:1098.97px;top:60.60px;width:0.80px;height:11.00px;background:#5c5c5c;"></div>
<div class="r" style="left:1104.53px;top:69.60px;width:0.70px;height:2.00px;background:#585858;"></div>
<div class="r" style="left:1110.08px;top:69.00px;width:0.70px;height:2.60px;background:#585858;"></div>
<div class="r" style="left:1115.64px;top:69.60px;width:0.70px;height:2.00px;background:#585858;"></div>
<span class="t" style="left:1101.37px;top:62px;font-size:7.0px;color:#a6a6a6;transform:scaleX(0.9700);letter-spacing:-0.1px;">7000</span>
<div class="r" style="left:1121.19px;top:60.60px;width:0.80px;height:11.00px;background:#5c5c5c;"></div>
<div class="r" style="left:1126.75px;top:69.60px;width:0.70px;height:2.00px;background:#585858;"></div>
<div class="r" style="left:1132.30px;top:69.00px;width:0.70px;height:2.60px;background:#585858;"></div>
<div class="r" style="left:1137.86px;top:69.60px;width:0.70px;height:2.00px;background:#585858;"></div>
<span class="t" style="left:1123.59px;top:62px;font-size:7.0px;color:#a6a6a6;transform:scaleX(0.9700);letter-spacing:-0.1px;">7200</span>
<div class="r" style="left:1143.41px;top:60.60px;width:0.80px;height:11.00px;background:#5c5c5c;"></div>
<div class="r" style="left:1148.97px;top:69.60px;width:0.70px;height:2.00px;background:#585858;"></div>
<div class="r" style="left:1154.53px;top:69.00px;width:0.70px;height:2.60px;background:#585858;"></div>
<div class="r" style="left:1160.08px;top:69.60px;width:0.70px;height:2.00px;background:#585858;"></div>
<span class="t" style="left:1145.81px;top:62px;font-size:7.0px;color:#a6a6a6;transform:scaleX(0.9700);letter-spacing:-0.1px;">7400</span>
<div class="r" style="left:1165.64px;top:60.60px;width:0.80px;height:11.00px;background:#5c5c5c;"></div>
<div class="r" style="left:1171.19px;top:69.60px;width:0.70px;height:2.00px;background:#585858;"></div>
<div class="r" style="left:1176.75px;top:69.00px;width:0.70px;height:2.60px;background:#585858;"></div>
<div class="r" style="left:1182.30px;top:69.60px;width:0.70px;height:2.00px;background:#585858;"></div>
<span class="t" style="left:1168.04px;top:62px;font-size:7.0px;color:#a6a6a6;transform:scaleX(0.9700);letter-spacing:-0.1px;">7600</span>
<div class="r" style="left:1187.86px;top:60.60px;width:0.80px;height:11.00px;background:#5c5c5c;"></div>
<div class="r" style="left:1193.41px;top:69.60px;width:0.70px;height:2.00px;background:#585858;"></div>
<div class="r" style="left:1198.97px;top:69.00px;width:0.70px;height:2.60px;background:#585858;"></div>
<div class="r" style="left:1204.52px;top:69.60px;width:0.70px;height:2.00px;background:#585858;"></div>
<span class="t" style="left:1190.26px;top:62px;font-size:7.0px;color:#a6a6a6;transform:scaleX(0.9700);letter-spacing:-0.1px;">7800</span>
<div class="r" style="left:1210.08px;top:60.60px;width:0.80px;height:11.00px;background:#5c5c5c;"></div>
<div class="r" style="left:1215.64px;top:69.60px;width:0.70px;height:2.00px;background:#585858;"></div>
<div class="r" style="left:1221.19px;top:69.00px;width:0.70px;height:2.60px;background:#585858;"></div>
<div class="r" style="left:1226.75px;top:69.60px;width:0.70px;height:2.00px;background:#585858;"></div>
<span class="t" style="left:1212.48px;top:62px;font-size:7.0px;color:#a6a6a6;transform:scaleX(0.9700);letter-spacing:-0.1px;">8000</span>
<div class="r" style="left:1232.30px;top:60.60px;width:0.80px;height:11.00px;background:#5c5c5c;"></div>
<div class="r" style="left:1237.86px;top:69.60px;width:0.70px;height:2.00px;background:#585858;"></div>
<div class="r" style="left:1243.41px;top:69.00px;width:0.70px;height:2.60px;background:#585858;"></div>
<div class="r" style="left:1248.97px;top:69.60px;width:0.70px;height:2.00px;background:#585858;"></div>
<span class="t" style="left:1234.70px;top:62px;font-size:7.0px;color:#a6a6a6;transform:scaleX(0.9700);letter-spacing:-0.1px;">8200</span>
<div class="r" style="left:1254.52px;top:60.60px;width:0.80px;height:11.00px;background:#5c5c5c;"></div>
<div class="r" style="left:1260.08px;top:69.60px;width:0.70px;height:2.00px;background:#585858;"></div>
<span class="t" style="left:1256.92px;top:62px;font-size:7.0px;color:#a6a6a6;transform:scaleX(0.9700);letter-spacing:-0.1px;">840</span>
<div class="r" style="left:0.60px;top:76.56px;width:11.20px;height:0.80px;background:#5e5e5e;"></div>
<div class="r" style="left:9.60px;top:82.11px;width:2.20px;height:0.70px;background:#5a5a5a;"></div>
<div class="r" style="left:9.00px;top:87.67px;width:2.80px;height:0.70px;background:#5a5a5a;"></div>
<div class="r" style="left:9.60px;top:93.22px;width:2.20px;height:0.70px;background:#5a5a5a;"></div>
<span class="t" style="left:2.20px;top:76px;font-size:6.6px;color:#a4a4a4;transform:rotate(90deg);transform-origin:2.4px 6px;">4</span>
<span class="t" style="left:2.20px;top:81px;font-size:6.6px;color:#a4a4a4;transform:rotate(90deg);transform-origin:2.4px 6px;">0</span>
<span class="t" style="left:2.20px;top:86px;font-size:6.6px;color:#a4a4a4;transform:rotate(90deg);transform-origin:2.4px 6px;">0</span>
<div class="r" style="left:0.60px;top:98.78px;width:11.20px;height:0.80px;background:#5e5e5e;"></div>
<div class="r" style="left:9.60px;top:104.33px;width:2.20px;height:0.70px;background:#5a5a5a;"></div>
<div class="r" style="left:9.00px;top:109.89px;width:2.80px;height:0.70px;background:#5a5a5a;"></div>
<div class="r" style="left:9.60px;top:115.44px;width:2.20px;height:0.70px;background:#5a5a5a;"></div>
<span class="t" style="left:2.20px;top:98px;font-size:6.6px;color:#a4a4a4;transform:rotate(90deg);transform-origin:2.4px 6px;">2</span>
<span class="t" style="left:2.20px;top:103px;font-size:6.6px;color:#a4a4a4;transform:rotate(90deg);transform-origin:2.4px 6px;">0</span>
<span class="t" style="left:2.20px;top:109px;font-size:6.6px;color:#a4a4a4;transform:rotate(90deg);transform-origin:2.4px 6px;">0</span>
<div class="r" style="left:0.60px;top:121.00px;width:11.20px;height:0.80px;background:#5e5e5e;"></div>
<div class="r" style="left:9.60px;top:126.56px;width:2.20px;height:0.70px;background:#5a5a5a;"></div>
<div class="r" style="left:9.00px;top:132.11px;width:2.80px;height:0.70px;background:#5a5a5a;"></div>
<div class="r" style="left:9.60px;top:137.67px;width:2.20px;height:0.70px;background:#5a5a5a;"></div>
<span class="t" style="left:2.20px;top:120px;font-size:6.6px;color:#a4a4a4;transform:rotate(90deg);transform-origin:2.4px 6px;">0</span>
<div class="r" style="left:0.60px;top:143.22px;width:11.20px;height:0.80px;background:#5e5e5e;"></div>
<div class="r" style="left:9.60px;top:148.78px;width:2.20px;height:0.70px;background:#5a5a5a;"></div>
<div class="r" style="left:9.00px;top:154.33px;width:2.80px;height:0.70px;background:#5a5a5a;"></div>
<div class="r" style="left:9.60px;top:159.89px;width:2.20px;height:0.70px;background:#5a5a5a;"></div>
<span class="t" style="left:2.20px;top:143px;font-size:6.6px;color:#a4a4a4;transform:rotate(90deg);transform-origin:2.4px 6px;">2</span>
<span class="t" style="left:2.20px;top:148px;font-size:6.6px;color:#a4a4a4;transform:rotate(90deg);transform-origin:2.4px 6px;">0</span>
<span class="t" style="left:2.20px;top:153px;font-size:6.6px;color:#a4a4a4;transform:rotate(90deg);transform-origin:2.4px 6px;">0</span>
<div class="r" style="left:0.60px;top:165.44px;width:11.20px;height:0.80px;background:#5e5e5e;"></div>
<div class="r" style="left:9.60px;top:171.00px;width:2.20px;height:0.70px;background:#5a5a5a;"></div>
<div class="r" style="left:9.00px;top:176.56px;width:2.80px;height:0.70px;background:#5a5a5a;"></div>
<div class="r" style="left:9.60px;top:182.11px;width:2.20px;height:0.70px;background:#5a5a5a;"></div>
<span class="t" style="left:2.20px;top:165px;font-size:6.6px;color:#a4a4a4;transform:rotate(90deg);transform-origin:2.4px 6px;">4</span>
<span class="t" style="left:2.20px;top:170px;font-size:6.6px;color:#a4a4a4;transform:rotate(90deg);transform-origin:2.4px 6px;">0</span>
<span class="t" style="left:2.20px;top:175px;font-size:6.6px;color:#a4a4a4;transform:rotate(90deg);transform-origin:2.4px 6px;">0</span>
<div class="r" style="left:0.60px;top:187.67px;width:11.20px;height:0.80px;background:#5e5e5e;"></div>
<div class="r" style="left:9.60px;top:193.22px;width:2.20px;height:0.70px;background:#5a5a5a;"></div>
<div class="r" style="left:9.00px;top:198.78px;width:2.80px;height:0.70px;background:#5a5a5a;"></div>
<div class="r" style="left:9.60px;top:204.33px;width:2.20px;height:0.70px;background:#5a5a5a;"></div>
<span class="t" style="left:2.20px;top:187px;font-size:6.6px;color:#a4a4a4;transform:rotate(90deg);transform-origin:2.4px 6px;">6</span>
<span class="t" style="left:2.20px;top:192px;font-size:6.6px;color:#a4a4a4;transform:rotate(90deg);transform-origin:2.4px 6px;">0</span>
<span class="t" style="left:2.20px;top:198px;font-size:6.6px;color:#a4a4a4;transform:rotate(90deg);transform-origin:2.4px 6px;">0</span>
<div class="r" style="left:0.60px;top:209.89px;width:11.20px;height:0.80px;background:#5e5e5e;"></div>
<div class="r" style="left:9.60px;top:215.44px;width:2.20px;height:0.70px;background:#5a5a5a;"></div>
<div class="r" style="left:9.00px;top:221.00px;width:2.80px;height:0.70px;background:#5a5a5a;"></div>
<div class="r" style="left:9.60px;top:226.55px;width:2.20px;height:0.70px;background:#5a5a5a;"></div>
<span class="t" style="left:2.20px;top:209px;font-size:6.6px;color:#a4a4a4;transform:rotate(90deg);transform-origin:2.4px 6px;">8</span>
<span class="t" style="left:2.20px;top:215px;font-size:6.6px;color:#a4a4a4;transform:rotate(90deg);transform-origin:2.4px 6px;">0</span>
<span class="t" style="left:2.20px;top:220px;font-size:6.6px;color:#a4a4a4;transform:rotate(90deg);transform-origin:2.4px 6px;">0</span>
<div class="r" style="left:0.60px;top:232.11px;width:11.20px;height:0.80px;background:#5e5e5e;"></div>
<div class="r" style="left:9.60px;top:237.67px;width:2.20px;height:0.70px;background:#5a5a5a;"></div>
<div class="r" style="left:9.00px;top:243.22px;width:2.80px;height:0.70px;background:#5a5a5a;"></div>
<div class="r" style="left:9.60px;top:248.78px;width:2.20px;height:0.70px;background:#5a5a5a;"></div>
<span class="t" style="left:2.20px;top:232px;font-size:6.6px;color:#a4a4a4;transform:rotate(90deg);transform-origin:2.4px 6px;">1</span>
<span class="t" style="left:2.20px;top:237px;font-size:6.6px;color:#a4a4a4;transform:rotate(90deg);transform-origin:2.4px 6px;">0</span>
<span class="t" style="left:2.20px;top:242px;font-size:6.6px;color:#a4a4a4;transform:rotate(90deg);transform-origin:2.4px 6px;">0</span>
<span class="t" style="left:2.20px;top:247px;font-size:6.6px;color:#a4a4a4;transform:rotate(90deg);transform-origin:2.4px 6px;">0</span>
<div class="r" style="left:0.60px;top:254.33px;width:11.20px;height:0.80px;background:#5e5e5e;"></div>
<div class="r" style="left:9.60px;top:259.89px;width:2.20px;height:0.70px;background:#5a5a5a;"></div>
<div class="r" style="left:9.00px;top:265.44px;width:2.80px;height:0.70px;background:#5a5a5a;"></div>
<div class="r" style="left:9.60px;top:271.00px;width:2.20px;height:0.70px;background:#5a5a5a;"></div>
<span class="t" style="left:2.20px;top:254px;font-size:6.6px;color:#a4a4a4;transform:rotate(90deg);transform-origin:2.4px 6px;">1</span>
<span class="t" style="left:2.20px;top:259px;font-size:6.6px;color:#a4a4a4;transform:rotate(90deg);transform-origin:2.4px 6px;">2</span>
<span class="t" style="left:2.20px;top:264px;font-size:6.6px;color:#a4a4a4;transform:rotate(90deg);transform-origin:2.4px 6px;">0</span>
<span class="t" style="left:2.20px;top:269px;font-size:6.6px;color:#a4a4a4;transform:rotate(90deg);transform-origin:2.4px 6px;">0</span>
<div class="r" style="left:0.60px;top:276.55px;width:11.20px;height:0.80px;background:#5e5e5e;"></div>
<div class="r" style="left:9.60px;top:282.11px;width:2.20px;height:0.70px;background:#5a5a5a;"></div>
<div class="r" style="left:9.00px;top:287.66px;width:2.80px;height:0.70px;background:#5a5a5a;"></div>
<div class="r" style="left:9.60px;top:293.22px;width:2.20px;height:0.70px;background:#5a5a5a;"></div>
<span class="t" style="left:2.20px;top:276px;font-size:6.6px;color:#a4a4a4;transform:rotate(90deg);transform-origin:2.4px 6px;">1</span>
<span class="t" style="left:2.20px;top:281px;font-size:6.6px;color:#a4a4a4;transform:rotate(90deg);transform-origin:2.4px 6px;">4</span>
<span class="t" style="left:2.20px;top:286px;font-size:6.6px;color:#a4a4a4;transform:rotate(90deg);transform-origin:2.4px 6px;">0</span>
<span class="t" style="left:2.20px;top:292px;font-size:6.6px;color:#a4a4a4;transform:rotate(90deg);transform-origin:2.4px 6px;">0</span>
<div class="r" style="left:0.60px;top:298.78px;width:11.20px;height:0.80px;background:#5e5e5e;"></div>
<div class="r" style="left:9.60px;top:304.33px;width:2.20px;height:0.70px;background:#5a5a5a;"></div>
<div class="r" style="left:9.00px;top:309.89px;width:2.80px;height:0.70px;background:#5a5a5a;"></div>
<div class="r" style="left:9.60px;top:315.44px;width:2.20px;height:0.70px;background:#5a5a5a;"></div>
<span class="t" style="left:2.20px;top:298px;font-size:6.6px;color:#a4a4a4;transform:rotate(90deg);transform-origin:2.4px 6px;">1</span>
<span class="t" style="left:2.20px;top:303px;font-size:6.6px;color:#a4a4a4;transform:rotate(90deg);transform-origin:2.4px 6px;">6</span>
<span class="t" style="left:2.20px;top:309px;font-size:6.6px;color:#a4a4a4;transform:rotate(90deg);transform-origin:2.4px 6px;">0</span>
<span class="t" style="left:2.20px;top:314px;font-size:6.6px;color:#a4a4a4;transform:rotate(90deg);transform-origin:2.4px 6px;">0</span>
<div class="r" style="left:0.60px;top:321.00px;width:11.20px;height:0.80px;background:#5e5e5e;"></div>
<div class="r" style="left:9.60px;top:326.55px;width:2.20px;height:0.70px;background:#5a5a5a;"></div>
<div class="r" style="left:9.00px;top:332.11px;width:2.80px;height:0.70px;background:#5a5a5a;"></div>
<div class="r" style="left:9.60px;top:337.66px;width:2.20px;height:0.70px;background:#5a5a5a;"></div>
<span class="t" style="left:2.20px;top:320px;font-size:6.6px;color:#a4a4a4;transform:rotate(90deg);transform-origin:2.4px 6px;">1</span>
<span class="t" style="left:2.20px;top:326px;font-size:6.6px;color:#a4a4a4;transform:rotate(90deg);transform-origin:2.4px 6px;">8</span>
<span class="t" style="left:2.20px;top:331px;font-size:6.6px;color:#a4a4a4;transform:rotate(90deg);transform-origin:2.4px 6px;">0</span>
<span class="t" style="left:2.20px;top:336px;font-size:6.6px;color:#a4a4a4;transform:rotate(90deg);transform-origin:2.4px 6px;">0</span>
<div class="r" style="left:0.60px;top:343.22px;width:11.20px;height:0.80px;background:#5e5e5e;"></div>
<div class="r" style="left:9.60px;top:348.78px;width:2.20px;height:0.70px;background:#5a5a5a;"></div>
<div class="r" style="left:9.00px;top:354.33px;width:2.80px;height:0.70px;background:#5a5a5a;"></div>
<div class="r" style="left:9.60px;top:359.89px;width:2.20px;height:0.70px;background:#5a5a5a;"></div>
<span class="t" style="left:2.20px;top:343px;font-size:6.6px;color:#a4a4a4;transform:rotate(90deg);transform-origin:2.4px 6px;">2</span>
<span class="t" style="left:2.20px;top:348px;font-size:6.6px;color:#a4a4a4;transform:rotate(90deg);transform-origin:2.4px 6px;">0</span>
<span class="t" style="left:2.20px;top:353px;font-size:6.6px;color:#a4a4a4;transform:rotate(90deg);transform-origin:2.4px 6px;">0</span>
<span class="t" style="left:2.20px;top:358px;font-size:6.6px;color:#a4a4a4;transform:rotate(90deg);transform-origin:2.4px 6px;">0</span>
<div class="r" style="left:0.60px;top:365.44px;width:11.20px;height:0.80px;background:#5e5e5e;"></div>
<div class="r" style="left:9.60px;top:371.00px;width:2.20px;height:0.70px;background:#5a5a5a;"></div>
<div class="r" style="left:9.00px;top:376.55px;width:2.80px;height:0.70px;background:#5a5a5a;"></div>
<div class="r" style="left:9.60px;top:382.11px;width:2.20px;height:0.70px;background:#5a5a5a;"></div>
<span class="t" style="left:2.20px;top:365px;font-size:6.6px;color:#a4a4a4;transform:rotate(90deg);transform-origin:2.4px 6px;">2</span>
<span class="t" style="left:2.20px;top:370px;font-size:6.6px;color:#a4a4a4;transform:rotate(90deg);transform-origin:2.4px 6px;">2</span>
<span class="t" style="left:2.20px;top:375px;font-size:6.6px;color:#a4a4a4;transform:rotate(90deg);transform-origin:2.4px 6px;">0</span>
<span class="t" style="left:2.20px;top:381px;font-size:6.6px;color:#a4a4a4;transform:rotate(90deg);transform-origin:2.4px 6px;">0</span>
<div class="r" style="left:0.60px;top:387.66px;width:11.20px;height:0.80px;background:#5e5e5e;"></div>
<div class="r" style="left:9.60px;top:393.22px;width:2.20px;height:0.70px;background:#5a5a5a;"></div>
<div class="r" style="left:9.00px;top:398.77px;width:2.80px;height:0.70px;background:#5a5a5a;"></div>
<div class="r" style="left:9.60px;top:404.33px;width:2.20px;height:0.70px;background:#5a5a5a;"></div>
<span class="t" style="left:2.20px;top:387px;font-size:6.6px;color:#a4a4a4;transform:rotate(90deg);transform-origin:2.4px 6px;">2</span>
<span class="t" style="left:2.20px;top:392px;font-size:6.6px;color:#a4a4a4;transform:rotate(90deg);transform-origin:2.4px 6px;">4</span>
<span class="t" style="left:2.20px;top:398px;font-size:6.6px;color:#a4a4a4;transform:rotate(90deg);transform-origin:2.4px 6px;">0</span>
<span class="t" style="left:2.20px;top:403px;font-size:6.6px;color:#a4a4a4;transform:rotate(90deg);transform-origin:2.4px 6px;">0</span>
<div class="r" style="left:0.60px;top:409.89px;width:11.20px;height:0.80px;background:#5e5e5e;"></div>
<div class="r" style="left:9.60px;top:415.44px;width:2.20px;height:0.70px;background:#5a5a5a;"></div>
<div class="r" style="left:9.00px;top:421.00px;width:2.80px;height:0.70px;background:#5a5a5a;"></div>
<div class="r" style="left:9.60px;top:426.55px;width:2.20px;height:0.70px;background:#5a5a5a;"></div>
<span class="t" style="left:2.20px;top:409px;font-size:6.6px;color:#a4a4a4;transform:rotate(90deg);transform-origin:2.4px 6px;">2</span>
<span class="t" style="left:2.20px;top:415px;font-size:6.6px;color:#a4a4a4;transform:rotate(90deg);transform-origin:2.4px 6px;">6</span>
<span class="t" style="left:2.20px;top:420px;font-size:6.6px;color:#a4a4a4;transform:rotate(90deg);transform-origin:2.4px 6px;">0</span>
<span class="t" style="left:2.20px;top:425px;font-size:6.6px;color:#a4a4a4;transform:rotate(90deg);transform-origin:2.4px 6px;">0</span>
<div class="r" style="left:0.60px;top:432.11px;width:11.20px;height:0.80px;background:#5e5e5e;"></div>
<div class="r" style="left:9.60px;top:437.66px;width:2.20px;height:0.70px;background:#5a5a5a;"></div>
<div class="r" style="left:9.00px;top:443.22px;width:2.80px;height:0.70px;background:#5a5a5a;"></div>
<div class="r" style="left:9.60px;top:448.77px;width:2.20px;height:0.70px;background:#5a5a5a;"></div>
<span class="t" style="left:2.20px;top:432px;font-size:6.6px;color:#a4a4a4;transform:rotate(90deg);transform-origin:2.4px 6px;">2</span>
<span class="t" style="left:2.20px;top:437px;font-size:6.6px;color:#a4a4a4;transform:rotate(90deg);transform-origin:2.4px 6px;">8</span>
<span class="t" style="left:2.20px;top:442px;font-size:6.6px;color:#a4a4a4;transform:rotate(90deg);transform-origin:2.4px 6px;">0</span>
<span class="t" style="left:2.20px;top:447px;font-size:6.6px;color:#a4a4a4;transform:rotate(90deg);transform-origin:2.4px 6px;">0</span>
<div class="r" style="left:0.60px;top:454.33px;width:11.20px;height:0.80px;background:#5e5e5e;"></div>
<div class="r" style="left:9.60px;top:459.89px;width:2.20px;height:0.70px;background:#5a5a5a;"></div>
<div class="r" style="left:9.00px;top:465.44px;width:2.80px;height:0.70px;background:#5a5a5a;"></div>
<div class="r" style="left:9.60px;top:471.00px;width:2.20px;height:0.70px;background:#5a5a5a;"></div>
<span class="t" style="left:2.20px;top:454px;font-size:6.6px;color:#a4a4a4;transform:rotate(90deg);transform-origin:2.4px 6px;">3</span>
<span class="t" style="left:2.20px;top:459px;font-size:6.6px;color:#a4a4a4;transform:rotate(90deg);transform-origin:2.4px 6px;">0</span>
<span class="t" style="left:2.20px;top:464px;font-size:6.6px;color:#a4a4a4;transform:rotate(90deg);transform-origin:2.4px 6px;">0</span>
<span class="t" style="left:2.20px;top:469px;font-size:6.6px;color:#a4a4a4;transform:rotate(90deg);transform-origin:2.4px 6px;">0</span>
<div class="r" style="left:0.60px;top:476.55px;width:11.20px;height:0.80px;background:#5e5e5e;"></div>
<div class="r" style="left:9.60px;top:482.11px;width:2.20px;height:0.70px;background:#5a5a5a;"></div>
<div class="r" style="left:9.00px;top:487.66px;width:2.80px;height:0.70px;background:#5a5a5a;"></div>
<div class="r" style="left:9.60px;top:493.22px;width:2.20px;height:0.70px;background:#5a5a5a;"></div>
<span class="t" style="left:2.20px;top:476px;font-size:6.6px;color:#a4a4a4;transform:rotate(90deg);transform-origin:2.4px 6px;">3</span>
<span class="t" style="left:2.20px;top:481px;font-size:6.6px;color:#a4a4a4;transform:rotate(90deg);transform-origin:2.4px 6px;">2</span>
<span class="t" style="left:2.20px;top:486px;font-size:6.6px;color:#a4a4a4;transform:rotate(90deg);transform-origin:2.4px 6px;">0</span>
<span class="t" style="left:2.20px;top:492px;font-size:6.6px;color:#a4a4a4;transform:rotate(90deg);transform-origin:2.4px 6px;">0</span>
<div class="r" style="left:0.60px;top:498.77px;width:11.20px;height:0.80px;background:#5e5e5e;"></div>
<div class="r" style="left:9.60px;top:504.33px;width:2.20px;height:0.70px;background:#5a5a5a;"></div>
<div class="r" style="left:9.00px;top:509.88px;width:2.80px;height:0.70px;background:#5a5a5a;"></div>
<div class="r" style="left:9.60px;top:515.44px;width:2.20px;height:0.70px;background:#5a5a5a;"></div>
<span class="t" style="left:2.20px;top:498px;font-size:6.6px;color:#a4a4a4;transform:rotate(90deg);transform-origin:2.4px 6px;">3</span>
<span class="t" style="left:2.20px;top:503px;font-size:6.6px;color:#a4a4a4;transform:rotate(90deg);transform-origin:2.4px 6px;">4</span>
<span class="t" style="left:2.20px;top:509px;font-size:6.6px;color:#a4a4a4;transform:rotate(90deg);transform-origin:2.4px 6px;">0</span>
<span class="t" style="left:2.20px;top:514px;font-size:6.6px;color:#a4a4a4;transform:rotate(90deg);transform-origin:2.4px 6px;">0</span>
<div class="r" style="left:0.60px;top:521.00px;width:11.20px;height:0.80px;background:#5e5e5e;"></div>
<div class="r" style="left:9.60px;top:526.55px;width:2.20px;height:0.70px;background:#5a5a5a;"></div>
<div class="r" style="left:9.00px;top:532.11px;width:2.80px;height:0.70px;background:#5a5a5a;"></div>
<div class="r" style="left:9.60px;top:537.66px;width:2.20px;height:0.70px;background:#5a5a5a;"></div>
<span class="t" style="left:2.20px;top:520px;font-size:6.6px;color:#a4a4a4;transform:rotate(90deg);transform-origin:2.4px 6px;">3</span>
<span class="t" style="left:2.20px;top:526px;font-size:6.6px;color:#a4a4a4;transform:rotate(90deg);transform-origin:2.4px 6px;">6</span>
<span class="t" style="left:2.20px;top:531px;font-size:6.6px;color:#a4a4a4;transform:rotate(90deg);transform-origin:2.4px 6px;">0</span>
<span class="t" style="left:2.20px;top:536px;font-size:6.6px;color:#a4a4a4;transform:rotate(90deg);transform-origin:2.4px 6px;">0</span>
<div class="r" style="left:0.60px;top:543.22px;width:11.20px;height:0.80px;background:#5e5e5e;"></div>
<div class="r" style="left:9.60px;top:548.77px;width:2.20px;height:0.70px;background:#5a5a5a;"></div>
<div class="r" style="left:9.00px;top:554.33px;width:2.80px;height:0.70px;background:#5a5a5a;"></div>
<div class="r" style="left:9.60px;top:559.88px;width:2.20px;height:0.70px;background:#5a5a5a;"></div>
<span class="t" style="left:2.20px;top:543px;font-size:6.6px;color:#a4a4a4;transform:rotate(90deg);transform-origin:2.4px 6px;">3</span>
<span class="t" style="left:2.20px;top:548px;font-size:6.6px;color:#a4a4a4;transform:rotate(90deg);transform-origin:2.4px 6px;">8</span>
<span class="t" style="left:2.20px;top:553px;font-size:6.6px;color:#a4a4a4;transform:rotate(90deg);transform-origin:2.4px 6px;">0</span>
<span class="t" style="left:2.20px;top:558px;font-size:6.6px;color:#a4a4a4;transform:rotate(90deg);transform-origin:2.4px 6px;">0</span>
<div class="r" style="left:0.60px;top:565.44px;width:11.20px;height:0.80px;background:#5e5e5e;"></div>
<div class="r" style="left:9.60px;top:571.00px;width:2.20px;height:0.70px;background:#5a5a5a;"></div>
<div class="r" style="left:9.00px;top:576.55px;width:2.80px;height:0.70px;background:#5a5a5a;"></div>
<div class="r" style="left:9.60px;top:582.11px;width:2.20px;height:0.70px;background:#5a5a5a;"></div>
<span class="t" style="left:2.20px;top:565px;font-size:6.6px;color:#a4a4a4;transform:rotate(90deg);transform-origin:2.4px 6px;">4</span>
<span class="t" style="left:2.20px;top:570px;font-size:6.6px;color:#a4a4a4;transform:rotate(90deg);transform-origin:2.4px 6px;">0</span>
<span class="t" style="left:2.20px;top:575px;font-size:6.6px;color:#a4a4a4;transform:rotate(90deg);transform-origin:2.4px 6px;">0</span>
<span class="t" style="left:2.20px;top:581px;font-size:6.6px;color:#a4a4a4;transform:rotate(90deg);transform-origin:2.4px 6px;">0</span>
<div class="r" style="left:0.60px;top:587.66px;width:11.20px;height:0.80px;background:#5e5e5e;"></div>
<div class="r" style="left:9.60px;top:593.22px;width:2.20px;height:0.70px;background:#5a5a5a;"></div>
<span class="t" style="left:2.20px;top:587px;font-size:6.6px;color:#a4a4a4;transform:rotate(90deg);transform-origin:2.4px 6px;">4</span>
<div class="r" style="left:0.00px;top:60.20px;width:12.20px;height:11.80px;background:#4a4a4a;"></div>
<div class="r" style="left:12.20px;top:60.60px;width:0.70px;height:11.40px;background:#3a3a3a;"></div>
<div class="r" style="left:0.00px;top:597.00px;width:1280.00px;height:11.40px;background:#464646;"></div>
<div class="r" style="left:0.00px;top:596.60px;width:1280.00px;height:0.80px;background:#3c3c3c;"></div>
<div class="r" style="left:33.00px;top:597.60px;width:122.50px;height:10.40px;background:#505050;"></div>
<span class="t" style="left:5.90px;top:597px;font-size:7.0px;color:#e6e6e6;transform:scaleX(0.9014);">16,67%</span>
<span class="t" style="left:57.50px;top:597px;font-size:7.0px;color:#c6c6c6;transform:scaleX(0.9195);">Dok: 62,9 MB/2,46 GB</span>
<svg style="left:148.4px;top:599px" width="4" height="7" viewBox="0 0 4 7"><path d="M0.6 0.5 L3.2 3.5 L0.6 6.5" fill="none" stroke="#c0c0c0" stroke-width="0.9"/></svg>
<svg style="left:321.2px;top:121px;overflow:hidden" width="638.2" height="426" viewBox="0.2 0 638.2 426">
<defs>
<filter id="b1" x="-20%" y="-20%" width="140%" height="140%"><feGaussianBlur stdDeviation="1.1"/></filter>
<filter id="b2" x="-20%" y="-20%" width="140%" height="140%"><feGaussianBlur stdDeviation="2.2"/></filter>
<filter id="b3" x="-20%" y="-20%" width="140%" height="140%"><feGaussianBlur stdDeviation="0.45"/></filter>
<linearGradient id="pg" x1="0" y1="0" x2="1" y2="0"><stop offset="0" stop-color="#f2f2f2"/><stop offset="0.25" stop-color="#fafafa"/><stop offset="0.7" stop-color="#fdfdfd"/><stop offset="1" stop-color="#f6f6f6"/></linearGradient>
<clipPath id="cp"><rect x="0" y="0" width="639" height="426"/></clipPath>
</defs>
<rect width="639" height="426" fill="url(#pg)"/>
<g clip-path="url(#cp)">
<!-- dark object at top -->
<rect x="202" y="0" width="232.4" height="40" fill="#14171e"/>
<rect x="388" y="0" width="44" height="3.4" fill="#3b4a61" opacity="0.8"/>
<!-- gold crackle pattern on right -->
<rect x="566" y="0" width="73" height="150" fill="#f1f0ee"/>
<g filter="url(#b3)" fill="none" stroke="#d0a242" stroke-width="0.95" opacity="0.95"><path d="M630.0 82.6 Q628.4 81.1 626.3 78.9 M630.0 82.6 Q634.5 85.4 636.0 85.9 M639.5 68.2 Q639.8 65.8 638.8 63.0 M639.5 68.2 Q634.5 70.5 632.0 71.2 M631.2 86.9 Q634.3 86.7 637.6 88.1 M631.2 86.9 Q630.5 85.3 629.2 81.2 M624.7 75.3 Q624.0 77.4 624.6 78.4 M624.7 75.3 Q626.5 77.7 625.9 79.2 M633.6 118.3 Q629.2 120.3 625.8 121.3 M633.6 118.3 Q635.4 122.2 635.4 123.6 M622.9 43.4 Q625.1 41.1 626.8 39.8 M622.9 43.4 Q625.9 46.7 626.8 47.9 M622.8 120.9 Q621.1 115.7 620.7 112.4 M622.8 120.9 Q619.7 121.3 618.4 122.3 M634.9 3.4 Q632.2 2.3 630.7 -0.8 M634.9 3.4 Q636.4 1.7 640.5 2.8 M640.6 144.6 Q642.4 143.7 642.9 142.3 M640.6 144.6 Q637.8 147.1 637.8 151.8 M634.1 91.2 Q633.6 90.8 631.1 92.1 M634.1 91.2 Q635.5 92.3 636.2 93.7 M624.1 -0.7 Q622.7 -1.9 619.4 -5.8 M624.1 -0.7 Q623.2 -3.6 622.5 -4.6 M631.6 6.1 Q635.1 5.3 637.4 6.5 M631.6 6.1 Q631.8 8.7 630.9 11.1 M624.8 34.0 Q621.6 32.4 619.1 29.1 M624.8 34.0 Q627.6 33.7 627.7 32.1 M621.6 68.0 Q623.9 71.3 625.5 72.2 M621.6 68.0 Q620.4 71.1 617.0 72.5 M629.8 125.9 Q633.0 124.0 635.2 123.9 M629.8 125.9 Q629.5 122.7 628.4 118.1 M631.4 95.0 Q633.8 100.5 633.3 103.1 M631.4 95.0 Q627.1 95.3 623.8 93.2 M631.0 98.4 Q631.3 96.2 634.1 94.3 M631.0 98.4 Q627.3 95.8 623.8 96.0 M630.1 39.6 Q631.7 37.0 631.4 36.4 M630.1 39.6 Q627.1 41.8 626.2 46.2 M641.0 149.3 Q638.3 149.5 633.7 148.6 M641.0 149.3 Q645.1 147.1 646.6 147.3 M637.8 105.3 Q637.7 109.0 638.9 111.4 M637.8 105.3 Q636.9 103.1 633.9 100.6 M627.3 32.1 Q627.3 35.8 625.3 37.0 M627.3 32.1 Q629.8 36.1 629.4 40.0 M626.8 7.7 Q625.0 6.8 623.0 5.9 M626.8 7.7 Q626.9 6.8 624.3 5.8 M636.3 58.3 Q633.3 60.5 630.0 62.8 M636.3 58.3 Q635.8 56.4 635.1 55.1 M637.9 56.1 Q641.4 54.9 646.2 53.8 M637.9 56.1 Q640.8 59.3 641.8 60.1 M640.2 126.6 Q636.8 127.4 635.3 127.4 M640.2 126.6 Q642.7 124.4 643.5 124.9 M621.0 29.1 Q622.3 30.6 622.5 33.2 M621.0 29.1 Q617.8 32.4 616.9 34.4 M639.2 68.9 Q640.6 70.1 643.6 73.1 M639.2 68.9 Q636.1 68.1 633.7 67.8 M640.6 57.8 Q637.8 57.8 636.7 57.1 M640.6 57.8 Q639.7 55.8 636.6 53.1 M622.5 93.3 Q624.5 92.5 625.2 89.9 M622.5 93.3 Q623.9 93.2 626.5 90.5 M636.6 38.3 Q638.6 41.6 638.4 47.1 M636.6 38.3 Q636.1 40.7 637.1 45.6 M622.7 47.9 Q625.0 44.4 625.5 43.1 M622.7 47.9 Q618.4 49.0 616.9 52.0 M640.3 113.0 Q639.9 108.0 636.8 105.3 M640.3 113.0 Q636.5 113.4 632.7 112.7 M623.4 34.7 Q622.8 34.9 624.6 37.9 M623.4 34.7 Q620.7 32.7 617.6 32.8 M623.0 6.2 Q624.9 9.6 624.7 10.0 M623.0 6.2 Q623.3 6.7 626.2 4.6 M636.9 24.2 Q632.7 25.0 629.6 26.0 M636.9 24.2 Q634.5 22.5 631.4 23.7 M632.2 65.5 Q630.0 61.5 629.7 57.8 M632.2 65.5 Q631.1 61.7 631.8 60.0 M624.8 109.0 Q624.5 109.8 621.7 108.7 M624.8 109.0 Q624.1 104.8 622.5 101.1 M623.6 95.5 Q622.6 94.6 618.7 92.0 M623.6 95.5 Q624.1 100.6 623.2 103.9 M623.3 61.4 Q625.6 60.0 625.5 56.4 M623.3 61.4 Q622.8 57.5 620.7 54.2 M625.3 38.3 Q624.5 36.5 624.7 34.9 M625.3 38.3 Q628.2 38.8 630.4 38.6 M640.4 119.9 Q641.4 123.7 641.4 128.5 M640.4 119.9 Q638.8 116.9 637.0 114.5 M627.1 132.4 Q631.1 133.2 633.9 132.4 M627.1 132.4 Q629.0 132.9 630.2 132.0 M625.2 57.3 Q623.8 59.1 625.0 62.7 M625.2 57.3 Q623.2 59.8 622.7 59.9 M638.1 95.2 Q636.6 94.5 632.3 93.3 M638.1 95.2 Q642.4 93.8 644.9 95.0 M623.0 148.4 Q618.6 147.5 616.8 144.0 M623.0 148.4 Q623.6 150.8 626.1 153.3 M625.3 36.5 Q625.3 35.2 622.7 34.4 M625.3 36.5 Q621.6 35.3 618.8 35.4 M636.5 47.3 Q634.0 45.3 632.9 42.1 M636.5 47.3 Q635.2 47.4 635.6 50.3 M626.9 8.2 Q628.7 12.6 631.1 14.5 M626.9 8.2 Q628.4 7.9 626.9 4.9 M622.8 86.2 Q626.4 88.0 630.4 89.9 M622.8 86.2 Q625.1 87.1 627.2 85.4 M625.9 89.0 Q626.8 87.1 624.9 83.3 M625.9 89.0 Q624.8 87.7 622.9 86.8 M628.4 66.3 Q629.0 66.8 629.4 69.5 M628.4 66.3 Q625.0 66.9 621.9 68.8 M640.2 71.0 Q638.6 69.7 635.4 68.3 M640.2 71.0 Q645.2 70.2 648.9 70.9 M632.5 129.6 Q636.5 132.7 638.8 135.1 M632.5 129.6 Q631.6 131.6 629.6 133.2 M624.7 20.6 Q622.6 17.8 619.0 16.9 M624.7 20.6 Q625.9 26.2 624.7 29.5 M639.2 122.1 Q640.1 122.3 642.4 123.0 M639.2 122.1 Q638.0 119.6 636.6 119.6 M626.0 26.0 Q629.2 28.3 632.0 29.7 M626.0 26.0 Q623.1 27.7 621.9 30.2 M635.8 140.9 Q634.4 135.7 635.5 132.9 M635.8 140.9 Q637.8 136.9 638.2 134.6 M624.9 142.4 Q623.8 143.0 620.9 144.5 M624.9 142.4 Q621.9 138.8 619.8 135.0 M638.6 89.3 Q638.3 84.7 638.4 80.8 M638.6 89.3 Q640.8 90.5 645.4 94.1 M629.4 12.9 Q627.3 11.1 624.0 10.6 M629.4 12.9 Q628.8 11.7 630.0 9.5 M621.8 144.3 Q624.5 146.1 626.0 146.7 M621.8 144.3 Q621.0 146.9 621.0 148.1 M625.8 104.8 Q625.2 106.4 623.3 107.6 M625.8 104.8 Q630.8 102.5 633.3 100.6 M585.3 4.4 Q585.5 1.8 586.9 -0.1 M585.3 4.4 Q588.4 2.3 592.9 1.1 M610.7 -0.4 Q608.7 1.2 607.3 3.5 M610.7 -0.4 Q612.7 2.8 612.9 5.6 M579.2 3.5 Q579.8 1.5 582.4 -2.0 M579.2 3.5 Q579.4 1.9 582.6 0.3 M571.2 -0.9 Q569.5 -1.4 565.0 -2.7 M571.2 -0.9 Q571.9 -1.7 572.3 -4.1 M608.0 4.7 Q610.2 6.7 611.0 6.4 M608.0 4.7 Q609.8 7.1 613.8 8.1 M612.1 -0.5 Q609.9 -1.5 609.4 -4.1 M612.1 -0.5 Q608.0 -1.5 604.6 -1.5 M634.8 -1.2 Q638.2 -1.7 641.7 -2.6 M634.8 -1.2 Q635.4 -5.0 633.5 -8.3 M567.2 -0.6 Q569.9 -2.8 570.5 -6.8 M567.2 -0.6 Q570.7 -3.8 571.4 -7.8 M599.4 -2.5 Q596.7 -3.2 592.2 -3.5 M599.4 -2.5 Q598.5 -0.1 596.0 -0.6 M579.2 0.3 Q576.9 1.5 576.4 3.1 M579.2 0.3 Q576.7 4.0 576.9 8.8 M608.9 -1.8 Q612.3 -0.5 614.1 2.7 M608.9 -1.8 Q611.8 0.5 614.2 0.4 M593.2 5.0 Q594.0 4.6 596.7 5.8 M593.2 5.0 Q593.8 7.8 593.8 12.3 M639.5 2.9 Q639.5 5.8 641.4 7.2 M639.5 2.9 Q639.3 5.8 637.2 8.7 M617.8 2.3 Q618.8 5.9 617.3 10.6 M617.8 2.3 Q613.6 0.1 609.5 -0.3 M576.5 -2.7 Q581.6 -1.7 584.8 -0.0 M576.5 -2.7 Q572.8 -1.7 570.5 -3.7 M567.3 5.2 Q564.7 3.3 564.9 1.5 M567.3 5.2 Q565.3 8.3 562.0 10.8 M618.6 5.7 Q619.1 6.6 620.7 9.0 M618.6 5.7 Q621.1 4.9 622.7 1.2 M567.6 2.7 Q566.2 6.6 567.0 8.9 M567.6 2.7 Q572.6 3.7 575.5 2.8 M602.2 3.6 Q604.8 3.5 606.2 5.9 M602.2 3.6 Q600.7 4.2 596.4 4.3 M589.9 6.0 Q592.3 3.9 592.9 2.2 M589.9 6.0 Q592.4 4.2 593.0 4.2 M571.6 1.9 Q567.7 2.1 565.7 0.3 M571.6 1.9 Q569.5 3.6 569.8 6.4 M621.3 5.1 Q617.3 6.4 614.1 6.6 M621.3 5.1 Q623.3 8.2 625.5 8.4 M621.3 3.3 Q621.5 -0.1 624.6 -2.7 M621.3 3.3 Q620.9 1.1 620.2 -1.0 M625.5 5.2 Q630.9 4.6 634.4 5.8 M625.5 5.2 Q623.4 3.8 622.0 2.1 M592.4 3.2 Q591.3 6.1 590.9 8.0 M592.4 3.2 Q593.0 4.8 592.2 7.4 M633.6 4.8 Q637.2 3.3 639.6 2.7 M633.6 4.8 Q633.3 2.0 635.2 1.7 M597.3 4.1 Q594.7 0.6 594.1 -2.4 M597.3 4.1 Q597.8 0.5 600.7 -1.5 M630.8 2.2 Q631.5 2.4 632.8 5.3 M630.8 2.2 Q633.2 1.3 635.6 -0.5"/></g>
<!-- ribbon -->
<g filter="url(#b1)">
<path d="M66.7 309 L65.8 325.7 L76.6 349.1 L86.5 369 L71.2 383.4 L53.2 405.1 L33 430 L66 430 L74.8 415.9 L83.8 397.9 L94.7 379.8 L97.4 367.2 L101.9 347.3 L92.9 331.1 L78.4 309 Z" fill="#efe1bf"/>
<path d="M74 318 L84 340 L88.6 366 L96 364 L98.8 348 L90 332 Z" fill="#f4e8da"/>
<path d="M86.5 369 L71.2 383.4 L60 398 L82 396 L93 380 L96 368 Z" fill="#e8d6aa" opacity="0.75"/>
<path d="M66.7 309 L65.8 325.7 L76.6 349.1 L86.5 369" fill="none" stroke="#e3cfa0" stroke-width="1.4"/>
</g>
<!-- cup with yellow tea -->
<g filter="url(#b1)">
<ellipse cx="285" cy="304" rx="41" ry="43" fill="#eceae6"/>
<ellipse cx="285.5" cy="303" rx="37.5" ry="39.5" fill="#f7f5f1"/>
<ellipse cx="289" cy="301" rx="34" ry="34" fill="#e6a51c"/>
<ellipse cx="291" cy="299" rx="30" ry="31" fill="#f4c60a"/>
<ellipse cx="292" cy="296" rx="24" ry="24" fill="#f7d21a"/>
</g>
<!-- hand -->
<g filter="url(#b1)">
<path d="M338 306 L384 306 L384 360 C376 348 366 334 352 322 Z" fill="#f5cdb9"/>
<path d="M350 318 C364 326 376 342 384 356 L384 362 C374 348 362 334 348 326 Z" fill="#efb49c"/>
<path d="M334 306 L350 306 C353 316 353 328 349 336 C345 342 338 340 335 334 C332 326 332 314 334 306 Z" fill="#e8a996"/>
<path d="M337 308 C336 318 336 328 339 336" stroke="#d98a78" stroke-width="1.6" fill="none"/>
</g>
</g>
</svg>
<div class="r" style="left:320.40px;top:120.40px;width:639.60px;height:0.80px;background:#1c1c1c;"></div>
<div class="r" style="left:320.40px;top:546.80px;width:639.60px;height:0.80px;background:#1c1c1c;"></div>
<div class="r" style="left:959.40px;top:120.40px;width:0.80px;height:427.20px;background:#1e1e1e;"></div>
<div class="r" style="left:0.00px;top:608.40px;width:1280.00px;height:18.60px;background:#424242;"></div>
<div class="r" style="left:0.00px;top:608.00px;width:1280.00px;height:0.80px;background:#383838;"></div>
<div class="r" style="left:2.00px;top:610.00px;width:37.00px;height:17.00px;background:#535353;"></div>
<span class="t" style="left:6.60px;top:613px;font-size:7.2px;color:#e8e8e8;font-weight:bold;transform:scaleX(0.8382);">Oś czasu</span>
<svg style="left:1268px;top:615px" width="8" height="6" viewBox="0 0 8 6"><path d="M0.5 1 H7.5 M0.5 3 H7.5 M0.5 5 H7.5" stroke="#c8c8c8" stroke-width="0.9"/></svg>
<div class="r" style="left:0.00px;top:627.00px;width:1280.00px;height:67.00px;background:#4f4f4f;"></div>
<div class="r" style="left:4.05px;top:632.40px;width:29.40px;height:30.20px;background:#585858;"></div>
<div class="r" style="left:36.25px;top:629.00px;width:0.80px;height:46.60px;background:#484848;"></div>
<div class="r" style="left:4.65px;top:637.60px;width:28.40px;height:19.10px;background:#f4f4f4;"></div>
<div class="r" style="left:13.95px;top:638.00px;width:9.90px;height:6.60px;background:#15171d;"></div>
<div class="r" style="left:4.65px;top:632.40px;width:7.80px;height:8.20px;background:#585858;"></div>
<span class="t" style="left:6.45px;top:632px;font-size:7.0px;color:#e0e0e0;transform:scaleX(0.9504);">1</span>
<span class="t" style="left:18.65px;top:664px;font-size:7.8px;color:#e4e4e4;transform:scaleX(0.9407);">0,2</span>
<svg style="left:29.35px;top:666.8px" width="4.6" height="4.4" viewBox="0 0 4.6 4.4"><path d="M0.3 0.5 L2.3 3.6 L4.3 0.5" fill="none" stroke="#c4c4c4" stroke-width="0.85"/></svg>
<div class="r" style="left:40.71px;top:632.40px;width:29.40px;height:30.20px;background:#585858;"></div>
<div class="r" style="left:72.91px;top:629.00px;width:0.80px;height:46.60px;background:#484848;"></div>
<div class="r" style="left:41.31px;top:637.60px;width:28.40px;height:19.10px;background:#f4f4f4;"></div>
<div class="r" style="left:50.61px;top:638.00px;width:9.90px;height:6.60px;background:#15171d;"></div>
<div class="r" style="left:41.31px;top:632.40px;width:7.80px;height:8.20px;background:#585858;"></div>
<span class="t" style="left:43.11px;top:632px;font-size:7.0px;color:#e0e0e0;transform:scaleX(0.9504);">2</span>
<span class="t" style="left:55.31px;top:664px;font-size:7.8px;color:#e4e4e4;transform:scaleX(0.9407);">0,2</span>
<svg style="left:66.01px;top:666.8px" width="4.6" height="4.4" viewBox="0 0 4.6 4.4"><path d="M0.3 0.5 L2.3 3.6 L4.3 0.5" fill="none" stroke="#c4c4c4" stroke-width="0.85"/></svg>
<div class="r" style="left:77.36px;top:632.40px;width:29.40px;height:30.20px;background:#585858;"></div>
<div class="r" style="left:109.56px;top:629.00px;width:0.80px;height:46.60px;background:#484848;"></div>
<div class="r" style="left:77.96px;top:637.60px;width:28.40px;height:19.10px;background:#f4f4f4;"></div>
<div class="r" style="left:87.26px;top:638.00px;width:9.90px;height:6.60px;background:#15171d;"></div>
<div class="r" style="left:98.56px;top:638.20px;width:7.80px;height:10.20px;background:rgba(232,210,165,0.42);border-radius:2px;filter:blur(0.5px);"></div>
<div class="r" style="left:77.96px;top:632.40px;width:7.80px;height:8.20px;background:#585858;"></div>
<span class="t" style="left:79.76px;top:632px;font-size:7.0px;color:#e0e0e0;transform:scaleX(0.9504);">3</span>
<span class="t" style="left:91.96px;top:664px;font-size:7.8px;color:#e4e4e4;transform:scaleX(0.9407);">0,2</span>
<svg style="left:102.66px;top:666.8px" width="4.6" height="4.4" viewBox="0 0 4.6 4.4"><path d="M0.3 0.5 L2.3 3.6 L4.3 0.5" fill="none" stroke="#c4c4c4" stroke-width="0.85"/></svg>
<div class="r" style="left:114.02px;top:632.40px;width:29.40px;height:30.20px;background:#585858;"></div>
<div class="r" style="left:146.22px;top:629.00px;width:0.80px;height:46.60px;background:#484848;"></div>
<div class="r" style="left:114.62px;top:637.60px;width:28.40px;height:19.10px;background:#f4f4f4;"></div>
<div class="r" style="left:123.92px;top:638.00px;width:9.90px;height:6.60px;background:#15171d;"></div>
<div class="r" style="left:135.22px;top:638.20px;width:7.80px;height:10.20px;background:rgba(232,210,165,0.42);border-radius:2px;filter:blur(0.5px);"></div>
<div class="r" style="left:138.22px;top:639.40px;width:2.00px;height:2.00px;background:#3a3a3a;border-radius:1px;"></div>
<div class="r" style="left:139.22px;top:642.60px;width:2.80px;height:3.20px;background:rgba(226,164,70,0.8);border-radius:1.2px;filter:blur(0.4px);"></div>
<div class="r" style="left:114.62px;top:632.40px;width:7.80px;height:8.20px;background:#585858;"></div>
<span class="t" style="left:116.42px;top:632px;font-size:7.0px;color:#e0e0e0;transform:scaleX(0.9504);">4</span>
<span class="t" style="left:128.62px;top:664px;font-size:7.8px;color:#e4e4e4;transform:scaleX(0.9407);">0,2</span>
<svg style="left:139.32px;top:666.8px" width="4.6" height="4.4" viewBox="0 0 4.6 4.4"><path d="M0.3 0.5 L2.3 3.6 L4.3 0.5" fill="none" stroke="#c4c4c4" stroke-width="0.85"/></svg>
<div class="r" style="left:150.68px;top:632.40px;width:29.40px;height:30.20px;background:#585858;"></div>
<div class="r" style="left:182.88px;top:629.00px;width:0.80px;height:46.60px;background:#484848;"></div>
<div class="r" style="left:151.28px;top:637.60px;width:28.40px;height:19.10px;background:#f4f4f4;"></div>
<div class="r" style="left:160.58px;top:638.00px;width:9.90px;height:6.60px;background:#15171d;"></div>
<div class="r" style="left:171.88px;top:638.20px;width:7.80px;height:10.20px;background:rgba(232,210,165,0.42);border-radius:2px;filter:blur(0.5px);"></div>
<div class="r" style="left:174.88px;top:639.40px;width:2.00px;height:2.00px;background:#3a3a3a;border-radius:1px;"></div>
<div class="r" style="left:175.88px;top:642.60px;width:2.80px;height:3.20px;background:rgba(226,162,70,0.8);border-radius:1.2px;filter:blur(0.4px);"></div>
<div class="r" style="left:151.28px;top:632.40px;width:7.80px;height:8.20px;background:#585858;"></div>
<span class="t" style="left:153.08px;top:632px;font-size:7.0px;color:#e0e0e0;transform:scaleX(0.9504);">5</span>
<span class="t" style="left:165.28px;top:664px;font-size:7.8px;color:#e4e4e4;transform:scaleX(0.9407);">0,2</span>
<svg style="left:175.98px;top:666.8px" width="4.6" height="4.4" viewBox="0 0 4.6 4.4"><path d="M0.3 0.5 L2.3 3.6 L4.3 0.5" fill="none" stroke="#c4c4c4" stroke-width="0.85"/></svg>
<div class="r" style="left:187.33px;top:632.40px;width:29.40px;height:30.20px;background:#585858;"></div>
<div class="r" style="left:219.53px;top:629.00px;width:0.80px;height:46.60px;background:#484848;"></div>
<div class="r" style="left:187.93px;top:637.60px;width:28.40px;height:19.10px;background:#f4f4f4;"></div>
<div class="r" style="left:197.23px;top:638.00px;width:9.90px;height:6.60px;background:#15171d;"></div>
<div class="r" style="left:208.53px;top:638.20px;width:7.80px;height:10.20px;background:rgba(232,210,165,0.42);border-radius:2px;filter:blur(0.5px);"></div>
<div class="r" style="left:211.53px;top:639.40px;width:2.00px;height:2.00px;background:#3a3a3a;border-radius:1px;"></div>
<div class="r" style="left:212.53px;top:642.60px;width:2.80px;height:3.20px;background:rgba(226,160,70,0.8);border-radius:1.2px;filter:blur(0.4px);"></div>
<div class="r" style="left:187.93px;top:632.40px;width:7.80px;height:8.20px;background:#585858;"></div>
<span class="t" style="left:189.73px;top:632px;font-size:7.0px;color:#e0e0e0;transform:scaleX(0.9504);">6</span>
<span class="t" style="left:201.93px;top:664px;font-size:7.8px;color:#e4e4e4;transform:scaleX(0.9407);">0,2</span>
<svg style="left:212.63px;top:666.8px" width="4.6" height="4.4" viewBox="0 0 4.6 4.4"><path d="M0.3 0.5 L2.3 3.6 L4.3 0.5" fill="none" stroke="#c4c4c4" stroke-width="0.85"/></svg>
<div class="r" style="left:223.99px;top:632.40px;width:29.40px;height:30.20px;background:#585858;"></div>
<div class="r" style="left:256.19px;top:629.00px;width:0.80px;height:46.60px;background:#484848;"></div>
<div class="r" style="left:224.59px;top:637.60px;width:28.40px;height:19.10px;background:#f4f4f4;"></div>
<div class="r" style="left:233.89px;top:638.00px;width:9.90px;height:6.60px;background:#15171d;"></div>
<div class="r" style="left:245.19px;top:638.20px;width:7.80px;height:10.20px;background:rgba(232,210,165,0.42);border-radius:2px;filter:blur(0.5px);"></div>
<div class="r" style="left:248.19px;top:639.40px;width:2.00px;height:2.00px;background:#3a3a3a;border-radius:1px;"></div>
<div class="r" style="left:249.19px;top:642.60px;width:2.80px;height:3.20px;background:rgba(226,158,70,0.8);border-radius:1.2px;filter:blur(0.4px);"></div>
<div class="r" style="left:224.59px;top:632.40px;width:7.80px;height:8.20px;background:#585858;"></div>
<span class="t" style="left:226.39px;top:632px;font-size:7.0px;color:#e0e0e0;transform:scaleX(0.9504);">7</span>
<span class="t" style="left:238.59px;top:664px;font-size:7.8px;color:#e4e4e4;transform:scaleX(0.9407);">0,2</span>
<svg style="left:249.29px;top:666.8px" width="4.6" height="4.4" viewBox="0 0 4.6 4.4"><path d="M0.3 0.5 L2.3 3.6 L4.3 0.5" fill="none" stroke="#c4c4c4" stroke-width="0.85"/></svg>
<div class="r" style="left:260.65px;top:632.40px;width:29.40px;height:30.20px;background:#585858;"></div>
<div class="r" style="left:292.85px;top:629.00px;width:0.80px;height:46.60px;background:#484848;"></div>
<div class="r" style="left:261.25px;top:637.60px;width:28.40px;height:19.10px;background:#f4f4f4;"></div>
<div class="r" style="left:270.55px;top:638.00px;width:9.90px;height:6.60px;background:#15171d;"></div>
<div class="r" style="left:281.85px;top:638.20px;width:7.80px;height:10.20px;background:rgba(232,210,165,0.42);border-radius:2px;filter:blur(0.5px);"></div>
<div class="r" style="left:284.85px;top:639.40px;width:2.00px;height:2.00px;background:#3a3a3a;border-radius:1px;"></div>
<div class="r" style="left:285.85px;top:642.60px;width:2.80px;height:3.20px;background:rgba(226,156,70,0.8);border-radius:1.2px;filter:blur(0.4px);"></div>
<div class="r" style="left:261.25px;top:632.40px;width:7.80px;height:8.20px;background:#585858;"></div>
<span class="t" style="left:263.05px;top:632px;font-size:7.0px;color:#e0e0e0;transform:scaleX(0.9504);">8</span>
<span class="t" style="left:275.25px;top:664px;font-size:7.8px;color:#e4e4e4;transform:scaleX(0.9407);">0,2</span>
<svg style="left:285.95px;top:666.8px" width="4.6" height="4.4" viewBox="0 0 4.6 4.4"><path d="M0.3 0.5 L2.3 3.6 L4.3 0.5" fill="none" stroke="#c4c4c4" stroke-width="0.85"/></svg>
<div class="r" style="left:297.31px;top:632.40px;width:29.40px;height:30.20px;background:#585858;"></div>
<div class="r" style="left:329.51px;top:629.00px;width:0.80px;height:46.60px;background:#484848;"></div>
<div class="r" style="left:297.91px;top:637.60px;width:28.40px;height:19.10px;background:#f4f4f4;"></div>
<div class="r" style="left:307.21px;top:638.00px;width:9.90px;height:6.60px;background:#15171d;"></div>
<div class="r" style="left:318.51px;top:638.20px;width:7.80px;height:10.20px;background:rgba(232,210,165,0.42);border-radius:2px;filter:blur(0.5px);"></div>
<div class="r" style="left:321.51px;top:639.40px;width:2.00px;height:2.00px;background:#3a3a3a;border-radius:1px;"></div>
<div class="r" style="left:322.51px;top:642.60px;width:2.80px;height:3.20px;background:rgba(226,154,70,0.8);border-radius:1.2px;filter:blur(0.4px);"></div>
<div class="r" style="left:297.91px;top:632.40px;width:7.80px;height:8.20px;background:#585858;"></div>
<span class="t" style="left:299.71px;top:632px;font-size:7.0px;color:#e0e0e0;transform:scaleX(0.9504);">9</span>
<span class="t" style="left:311.91px;top:664px;font-size:7.8px;color:#e4e4e4;transform:scaleX(0.9407);">0,2</span>
<svg style="left:322.61px;top:666.8px" width="4.6" height="4.4" viewBox="0 0 4.6 4.4"><path d="M0.3 0.5 L2.3 3.6 L4.3 0.5" fill="none" stroke="#c4c4c4" stroke-width="0.85"/></svg>
<div class="r" style="left:333.96px;top:632.40px;width:29.40px;height:30.20px;background:#585858;"></div>
<div class="r" style="left:366.16px;top:629.00px;width:0.80px;height:46.60px;background:#484848;"></div>
<div class="r" style="left:334.56px;top:637.60px;width:28.40px;height:19.10px;background:#f4f4f4;"></div>
<div class="r" style="left:343.86px;top:638.00px;width:9.90px;height:6.60px;background:#15171d;"></div>
<div class="r" style="left:355.16px;top:638.20px;width:7.80px;height:10.20px;background:rgba(232,210,165,0.30);border-radius:2px;filter:blur(0.5px);"></div>
<div class="r" style="left:358.16px;top:639.40px;width:2.00px;height:2.00px;background:#3a3a3a;border-radius:1px;"></div>
<div class="r" style="left:359.16px;top:642.60px;width:2.80px;height:3.20px;background:rgba(226,152,70,0.8);border-radius:1.2px;filter:blur(0.4px);"></div>
<div class="r" style="left:336.96px;top:645.40px;width:2.00px;height:1.20px;background:rgba(170,150,150,0.55);"></div>
<div class="r" style="left:341.56px;top:648.40px;width:5.00px;height:0.80px;background:rgba(225,205,190,0.6);"></div>
<div class="r" style="left:334.56px;top:632.40px;width:11.40px;height:8.20px;background:#585858;"></div>
<span class="t" style="left:336.36px;top:632px;font-size:7.0px;color:#e0e0e0;transform:scaleX(0.9504);">10</span>
<span class="t" style="left:348.56px;top:664px;font-size:7.8px;color:#e4e4e4;transform:scaleX(0.9407);">0,2</span>
<svg style="left:359.26px;top:666.8px" width="4.6" height="4.4" viewBox="0 0 4.6 4.4"><path d="M0.3 0.5 L2.3 3.6 L4.3 0.5" fill="none" stroke="#c4c4c4" stroke-width="0.85"/></svg>
<div class="r" style="left:370.62px;top:632.40px;width:29.40px;height:30.20px;background:#585858;"></div>
<div class="r" style="left:402.82px;top:629.00px;width:0.80px;height:46.60px;background:#484848;"></div>
<div class="r" style="left:371.22px;top:637.60px;width:28.40px;height:19.10px;background:#f4f4f4;"></div>
<div class="r" style="left:380.52px;top:638.00px;width:9.90px;height:6.60px;background:#15171d;"></div>
<div class="r" style="left:391.82px;top:638.20px;width:7.80px;height:10.20px;background:rgba(232,210,165,0.30);border-radius:2px;filter:blur(0.5px);"></div>
<div class="r" style="left:394.82px;top:639.40px;width:2.00px;height:2.00px;background:#3a3a3a;border-radius:1px;"></div>
<div class="r" style="left:395.82px;top:642.60px;width:2.80px;height:3.20px;background:rgba(226,150,70,0.8);border-radius:1.2px;filter:blur(0.4px);"></div>
<div class="r" style="left:373.62px;top:645.40px;width:2.00px;height:1.20px;background:rgba(170,150,150,0.55);"></div>
<div class="r" style="left:378.22px;top:648.40px;width:5.00px;height:0.80px;background:rgba(225,205,190,0.6);"></div>
<div class="r" style="left:371.22px;top:632.40px;width:11.40px;height:8.20px;background:#585858;"></div>
<span class="t" style="left:373.02px;top:632px;font-size:7.0px;color:#e0e0e0;transform:scaleX(1.0183);">11</span>
<span class="t" style="left:385.22px;top:664px;font-size:7.8px;color:#e4e4e4;transform:scaleX(0.9407);">0,2</span>
<svg style="left:395.92px;top:666.8px" width="4.6" height="4.4" viewBox="0 0 4.6 4.4"><path d="M0.3 0.5 L2.3 3.6 L4.3 0.5" fill="none" stroke="#c4c4c4" stroke-width="0.85"/></svg>
<div class="r" style="left:407.28px;top:632.40px;width:29.40px;height:30.20px;background:#585858;"></div>
<div class="r" style="left:439.48px;top:629.00px;width:0.80px;height:46.60px;background:#484848;"></div>
<div class="r" style="left:407.88px;top:637.60px;width:28.40px;height:19.10px;background:#f4f4f4;"></div>
<div class="r" style="left:417.18px;top:638.00px;width:9.90px;height:6.60px;background:#15171d;"></div>
<div class="r" style="left:428.48px;top:638.20px;width:7.80px;height:10.20px;background:rgba(232,210,165,0.30);border-radius:2px;filter:blur(0.5px);"></div>
<div class="r" style="left:431.48px;top:639.40px;width:2.00px;height:2.00px;background:#3a3a3a;border-radius:1px;"></div>
<div class="r" style="left:432.48px;top:642.60px;width:2.80px;height:3.20px;background:rgba(226,148,70,0.8);border-radius:1.2px;filter:blur(0.4px);"></div>
<div class="r" style="left:410.28px;top:645.40px;width:2.00px;height:1.20px;background:rgba(170,150,150,0.55);"></div>
<div class="r" style="left:414.88px;top:648.40px;width:5.00px;height:0.80px;background:rgba(225,205,190,0.6);"></div>
<div class="r" style="left:407.88px;top:632.40px;width:11.40px;height:8.20px;background:#585858;"></div>
<span class="t" style="left:409.68px;top:632px;font-size:7.0px;color:#e0e0e0;transform:scaleX(0.9504);">12</span>
<span class="t" style="left:421.88px;top:664px;font-size:7.8px;color:#e4e4e4;transform:scaleX(0.9407);">0,2</span>
<svg style="left:432.58px;top:666.8px" width="4.6" height="4.4" viewBox="0 0 4.6 4.4"><path d="M0.3 0.5 L2.3 3.6 L4.3 0.5" fill="none" stroke="#c4c4c4" stroke-width="0.85"/></svg>
<div class="r" style="left:443.93px;top:632.40px;width:29.40px;height:30.20px;background:#585858;"></div>
<div class="r" style="left:476.13px;top:629.00px;width:0.80px;height:46.60px;background:#484848;"></div>
<div class="r" style="left:444.53px;top:637.60px;width:28.40px;height:19.10px;background:#f4f4f4;"></div>
<div class="r" style="left:453.83px;top:638.00px;width:9.90px;height:6.60px;background:#15171d;"></div>
<div class="r" style="left:465.13px;top:638.20px;width:7.80px;height:10.20px;background:rgba(232,210,165,0.30);border-radius:2px;filter:blur(0.5px);"></div>
<div class="r" style="left:468.13px;top:639.40px;width:2.00px;height:2.00px;background:#3a3a3a;border-radius:1px;"></div>
<div class="r" style="left:469.13px;top:642.60px;width:2.80px;height:3.20px;background:rgba(226,146,70,0.8);border-radius:1.2px;filter:blur(0.4px);"></div>
<div class="r" style="left:446.93px;top:645.40px;width:2.00px;height:1.20px;background:rgba(170,150,150,0.55);"></div>
<div class="r" style="left:451.53px;top:648.40px;width:5.00px;height:0.80px;background:rgba(225,205,190,0.6);"></div>
<div class="r" style="left:444.53px;top:632.40px;width:11.40px;height:8.20px;background:#585858;"></div>
<span class="t" style="left:446.33px;top:632px;font-size:7.0px;color:#e0e0e0;transform:scaleX(0.9504);">13</span>
<span class="t" style="left:458.53px;top:664px;font-size:7.8px;color:#e4e4e4;transform:scaleX(0.9407);">0,2</span>
<svg style="left:469.23px;top:666.8px" width="4.6" height="4.4" viewBox="0 0 4.6 4.4"><path d="M0.3 0.5 L2.3 3.6 L4.3 0.5" fill="none" stroke="#c4c4c4" stroke-width="0.85"/></svg>
<div class="r" style="left:480.59px;top:632.40px;width:29.40px;height:30.20px;background:#585858;"></div>
<div class="r" style="left:512.79px;top:629.00px;width:0.80px;height:46.60px;background:#484848;"></div>
<div class="r" style="left:481.19px;top:637.60px;width:28.40px;height:19.10px;background:#f4f4f4;"></div>
<div class="r" style="left:490.49px;top:638.00px;width:9.90px;height:6.60px;background:#15171d;"></div>
<div class="r" style="left:501.79px;top:638.20px;width:7.80px;height:10.20px;background:rgba(232,210,165,0.30);border-radius:2px;filter:blur(0.5px);"></div>
<div class="r" style="left:504.79px;top:639.40px;width:2.00px;height:2.00px;background:#3a3a3a;border-radius:1px;"></div>
<div class="r" style="left:505.79px;top:642.60px;width:2.80px;height:3.20px;background:rgba(226,144,70,0.8);border-radius:1.2px;filter:blur(0.4px);"></div>
<div class="r" style="left:483.59px;top:645.40px;width:2.00px;height:1.20px;background:rgba(170,150,150,0.55);"></div>
<div class="r" style="left:488.19px;top:648.40px;width:5.00px;height:0.80px;background:rgba(225,205,190,0.6);"></div>
<div class="r" style="left:481.19px;top:632.40px;width:11.40px;height:8.20px;background:#585858;"></div>
<span class="t" style="left:482.99px;top:632px;font-size:7.0px;color:#e0e0e0;transform:scaleX(0.9504);">14</span>
<span class="t" style="left:495.19px;top:664px;font-size:7.8px;color:#e4e4e4;transform:scaleX(0.9407);">0,2</span>
<svg style="left:505.89px;top:666.8px" width="4.6" height="4.4" viewBox="0 0 4.6 4.4"><path d="M0.3 0.5 L2.3 3.6 L4.3 0.5" fill="none" stroke="#c4c4c4" stroke-width="0.85"/></svg>
<div class="r" style="left:517.25px;top:632.40px;width:29.40px;height:30.20px;background:#585858;"></div>
<div class="r" style="left:549.45px;top:629.00px;width:0.80px;height:46.60px;background:#484848;"></div>
<div class="r" style="left:517.85px;top:637.60px;width:28.40px;height:19.10px;background:#f4f4f4;"></div>
<div class="r" style="left:527.15px;top:638.00px;width:9.90px;height:6.60px;background:#15171d;"></div>
<div class="r" style="left:538.45px;top:638.20px;width:7.80px;height:10.20px;background:rgba(232,210,165,0.30);border-radius:2px;filter:blur(0.5px);"></div>
<div class="r" style="left:541.45px;top:639.40px;width:2.00px;height:2.00px;background:#3a3a3a;border-radius:1px;"></div>
<div class="r" style="left:542.45px;top:642.60px;width:2.80px;height:3.20px;background:rgba(226,142,70,0.8);border-radius:1.2px;filter:blur(0.4px);"></div>
<div class="r" style="left:520.25px;top:645.40px;width:2.00px;height:1.20px;background:rgba(170,150,150,0.55);"></div>
<div class="r" style="left:524.85px;top:648.40px;width:5.00px;height:0.80px;background:rgba(225,205,190,0.6);"></div>
<div class="r" style="left:517.85px;top:632.40px;width:11.40px;height:8.20px;background:#585858;"></div>
<span class="t" style="left:519.65px;top:632px;font-size:7.0px;color:#e0e0e0;transform:scaleX(0.9504);">15</span>
<span class="t" style="left:531.85px;top:664px;font-size:7.8px;color:#e4e4e4;transform:scaleX(0.9407);">0,2</span>
<svg style="left:542.55px;top:666.8px" width="4.6" height="4.4" viewBox="0 0 4.6 4.4"><path d="M0.3 0.5 L2.3 3.6 L4.3 0.5" fill="none" stroke="#c4c4c4" stroke-width="0.85"/></svg>
<div class="r" style="left:553.90px;top:632.40px;width:29.40px;height:30.20px;background:#585858;"></div>
<div class="r" style="left:586.10px;top:629.00px;width:0.80px;height:46.60px;background:#484848;"></div>
<div class="r" style="left:554.50px;top:637.60px;width:28.40px;height:19.10px;background:#f4f4f4;"></div>
<div class="r" style="left:563.80px;top:638.00px;width:9.90px;height:6.60px;background:#15171d;"></div>
<div class="r" style="left:575.10px;top:638.20px;width:7.80px;height:10.20px;background:rgba(232,210,165,0.30);border-radius:2px;filter:blur(0.5px);"></div>
<div class="r" style="left:578.10px;top:639.40px;width:2.00px;height:2.00px;background:#3a3a3a;border-radius:1px;"></div>
<div class="r" style="left:579.10px;top:642.60px;width:2.80px;height:3.20px;background:rgba(226,140,70,0.8);border-radius:1.2px;filter:blur(0.4px);"></div>
<div class="r" style="left:556.90px;top:645.40px;width:2.00px;height:1.20px;background:rgba(170,150,150,0.55);"></div>
<div class="r" style="left:561.50px;top:648.40px;width:5.00px;height:0.80px;background:rgba(225,205,190,0.6);"></div>
<div class="r" style="left:554.50px;top:632.40px;width:11.40px;height:8.20px;background:#585858;"></div>
<span class="t" style="left:556.30px;top:632px;font-size:7.0px;color:#e0e0e0;transform:scaleX(0.9504);">16</span>
<span class="t" style="left:568.50px;top:664px;font-size:7.8px;color:#e4e4e4;transform:scaleX(0.9407);">0,2</span>
<svg style="left:579.20px;top:666.8px" width="4.6" height="4.4" viewBox="0 0 4.6 4.4"><path d="M0.3 0.5 L2.3 3.6 L4.3 0.5" fill="none" stroke="#c4c4c4" stroke-width="0.85"/></svg>
<div class="r" style="left:590.56px;top:632.40px;width:29.40px;height:30.20px;background:#585858;"></div>
<div class="r" style="left:622.76px;top:629.00px;width:0.80px;height:46.60px;background:#484848;"></div>
<div class="r" style="left:591.16px;top:637.60px;width:28.40px;height:19.10px;background:#f4f4f4;"></div>
<div class="r" style="left:600.46px;top:638.00px;width:9.90px;height:6.60px;background:#15171d;"></div>
<div class="r" style="left:611.76px;top:638.20px;width:7.80px;height:10.20px;background:rgba(232,210,165,0.30);border-radius:2px;filter:blur(0.5px);"></div>
<div class="r" style="left:614.76px;top:639.40px;width:2.00px;height:2.00px;background:#3a3a3a;border-radius:1px;"></div>
<div class="r" style="left:615.76px;top:642.60px;width:2.80px;height:3.20px;background:rgba(226,138,70,0.8);border-radius:1.2px;filter:blur(0.4px);"></div>
<div class="r" style="left:593.56px;top:645.40px;width:2.00px;height:1.20px;background:rgba(170,150,150,0.55);"></div>
<div class="r" style="left:598.16px;top:648.40px;width:5.00px;height:0.80px;background:rgba(225,205,190,0.6);"></div>
<div class="r" style="left:591.16px;top:632.40px;width:11.40px;height:8.20px;background:#585858;"></div>
<span class="t" style="left:592.96px;top:632px;font-size:7.0px;color:#e0e0e0;transform:scaleX(0.9504);">17</span>
<span class="t" style="left:605.16px;top:664px;font-size:7.8px;color:#e4e4e4;transform:scaleX(0.9407);">0,2</span>
<svg style="left:615.86px;top:666.8px" width="4.6" height="4.4" viewBox="0 0 4.6 4.4"><path d="M0.3 0.5 L2.3 3.6 L4.3 0.5" fill="none" stroke="#c4c4c4" stroke-width="0.85"/></svg>
<div class="r" style="left:627.22px;top:632.40px;width:29.40px;height:30.20px;background:#585858;"></div>
<div class="r" style="left:659.42px;top:629.00px;width:0.80px;height:46.60px;background:#484848;"></div>
<div class="r" style="left:627.82px;top:637.60px;width:28.40px;height:19.10px;background:#f4f4f4;"></div>
<div class="r" style="left:637.12px;top:638.00px;width:9.90px;height:6.60px;background:#15171d;"></div>
<div class="r" style="left:648.42px;top:638.20px;width:7.80px;height:10.20px;background:rgba(232,210,165,0.30);border-radius:2px;filter:blur(0.5px);"></div>
<div class="r" style="left:651.42px;top:639.40px;width:2.00px;height:2.00px;background:#3a3a3a;border-radius:1px;"></div>
<div class="r" style="left:652.42px;top:642.60px;width:2.80px;height:3.20px;background:rgba(226,136,70,0.8);border-radius:1.2px;filter:blur(0.4px);"></div>
<div class="r" style="left:630.22px;top:645.40px;width:2.00px;height:1.20px;background:rgba(170,150,150,0.55);"></div>
<div class="r" style="left:634.82px;top:648.40px;width:5.00px;height:0.80px;background:rgba(225,205,190,0.6);"></div>
<div class="r" style="left:627.82px;top:632.40px;width:11.40px;height:8.20px;background:#585858;"></div>
<span class="t" style="left:629.62px;top:632px;font-size:7.0px;color:#e0e0e0;transform:scaleX(0.9504);">18</span>
<span class="t" style="left:641.82px;top:664px;font-size:7.8px;color:#e4e4e4;transform:scaleX(0.9407);">0,2</span>
<svg style="left:652.52px;top:666.8px" width="4.6" height="4.4" viewBox="0 0 4.6 4.4"><path d="M0.3 0.5 L2.3 3.6 L4.3 0.5" fill="none" stroke="#c4c4c4" stroke-width="0.85"/></svg>
<div class="r" style="left:663.88px;top:632.40px;width:29.40px;height:30.20px;background:#585858;"></div>
<div class="r" style="left:696.08px;top:629.00px;width:0.80px;height:46.60px;background:#484848;"></div>
<div class="r" style="left:664.48px;top:637.60px;width:28.40px;height:19.10px;background:#f4f4f4;"></div>
<div class="r" style="left:673.78px;top:638.00px;width:9.90px;height:6.60px;background:#15171d;"></div>
<div class="r" style="left:685.08px;top:638.20px;width:7.80px;height:10.20px;background:rgba(232,210,165,0.30);border-radius:2px;filter:blur(0.5px);"></div>
<div class="r" style="left:688.08px;top:639.40px;width:2.00px;height:2.00px;background:#3a3a3a;border-radius:1px;"></div>
<div class="r" style="left:689.08px;top:642.60px;width:2.80px;height:3.20px;background:rgba(226,134,70,0.8);border-radius:1.2px;filter:blur(0.4px);"></div>
<div class="r" style="left:666.88px;top:645.40px;width:2.00px;height:1.20px;background:rgba(170,150,150,0.55);"></div>
<div class="r" style="left:671.48px;top:648.40px;width:5.00px;height:0.80px;background:rgba(225,205,190,0.6);"></div>
<div class="r" style="left:664.48px;top:632.40px;width:11.40px;height:8.20px;background:#585858;"></div>
<span class="t" style="left:666.28px;top:632px;font-size:7.0px;color:#e0e0e0;transform:scaleX(0.9504);">19</span>
<span class="t" style="left:678.48px;top:664px;font-size:7.8px;color:#e4e4e4;transform:scaleX(0.9407);">0,2</span>
<svg style="left:689.18px;top:666.8px" width="4.6" height="4.4" viewBox="0 0 4.6 4.4"><path d="M0.3 0.5 L2.3 3.6 L4.3 0.5" fill="none" stroke="#c4c4c4" stroke-width="0.85"/></svg>
<div class="r" style="left:700.53px;top:632.40px;width:29.40px;height:30.20px;background:#585858;"></div>
<div class="r" style="left:732.73px;top:629.00px;width:0.80px;height:46.60px;background:#484848;"></div>
<div class="r" style="left:701.13px;top:637.60px;width:28.40px;height:19.10px;background:#f4f4f4;"></div>
<div class="r" style="left:710.43px;top:638.00px;width:9.90px;height:6.60px;background:#15171d;"></div>
<div class="r" style="left:721.73px;top:638.20px;width:7.80px;height:10.20px;background:rgba(232,210,165,0.30);border-radius:2px;filter:blur(0.5px);"></div>
<div class="r" style="left:724.73px;top:639.40px;width:2.00px;height:2.00px;background:#3a3a3a;border-radius:1px;"></div>
<div class="r" style="left:725.73px;top:642.60px;width:2.80px;height:3.20px;background:rgba(226,132,70,0.8);border-radius:1.2px;filter:blur(0.4px);"></div>
<div class="r" style="left:703.53px;top:645.40px;width:2.00px;height:1.20px;background:rgba(170,150,150,0.55);"></div>
<div class="r" style="left:708.13px;top:648.40px;width:5.00px;height:0.80px;background:rgba(225,205,190,0.6);"></div>
<div class="r" style="left:701.13px;top:632.40px;width:11.40px;height:8.20px;background:#585858;"></div>
<span class="t" style="left:702.93px;top:632px;font-size:7.0px;color:#e0e0e0;transform:scaleX(0.9504);">20</span>
<span class="t" style="left:715.13px;top:664px;font-size:7.8px;color:#e4e4e4;transform:scaleX(0.9407);">0,2</span>
<svg style="left:725.83px;top:666.8px" width="4.6" height="4.4" viewBox="0 0 4.6 4.4"><path d="M0.3 0.5 L2.3 3.6 L4.3 0.5" fill="none" stroke="#c4c4c4" stroke-width="0.85"/></svg>
<div class="r" style="left:737.19px;top:632.40px;width:29.40px;height:30.20px;background:#585858;"></div>
<div class="r" style="left:769.39px;top:629.00px;width:0.80px;height:46.60px;background:#484848;"></div>
<div class="r" style="left:737.79px;top:637.60px;width:28.40px;height:19.10px;background:#f4f4f4;"></div>
<div class="r" style="left:747.09px;top:638.00px;width:9.90px;height:6.60px;background:#15171d;"></div>
<div class="r" style="left:758.39px;top:638.20px;width:7.80px;height:10.20px;background:rgba(232,210,165,0.30);border-radius:2px;filter:blur(0.5px);"></div>
<div class="r" style="left:761.39px;top:639.40px;width:2.00px;height:2.00px;background:#3a3a3a;border-radius:1px;"></div>
<div class="r" style="left:762.39px;top:642.60px;width:2.80px;height:3.20px;background:rgba(226,130,70,0.8);border-radius:1.2px;filter:blur(0.4px);"></div>
<div class="r" style="left:740.19px;top:645.40px;width:2.00px;height:1.20px;background:rgba(170,150,150,0.55);"></div>
<div class="r" style="left:744.79px;top:648.40px;width:5.00px;height:0.80px;background:rgba(225,205,190,0.6);"></div>
<div class="r" style="left:737.79px;top:632.40px;width:11.40px;height:8.20px;background:#585858;"></div>
<span class="t" style="left:739.59px;top:632px;font-size:7.0px;color:#e0e0e0;transform:scaleX(0.9504);">21</span>
<span class="t" style="left:751.79px;top:664px;font-size:7.8px;color:#e4e4e4;transform:scaleX(0.9407);">0,2</span>
<svg style="left:762.49px;top:666.8px" width="4.6" height="4.4" viewBox="0 0 4.6 4.4"><path d="M0.3 0.5 L2.3 3.6 L4.3 0.5" fill="none" stroke="#c4c4c4" stroke-width="0.85"/></svg>
<div class="r" style="left:773.85px;top:632.40px;width:29.40px;height:30.20px;background:#585858;"></div>
<div class="r" style="left:806.05px;top:629.00px;width:0.80px;height:46.60px;background:#484848;"></div>
<div class="r" style="left:774.45px;top:637.60px;width:28.40px;height:19.10px;background:#f4f4f4;"></div>
<div class="r" style="left:783.75px;top:638.00px;width:9.90px;height:6.60px;background:#15171d;"></div>
<div class="r" style="left:795.05px;top:638.20px;width:7.80px;height:10.20px;background:rgba(232,210,165,0.30);border-radius:2px;filter:blur(0.5px);"></div>
<div class="r" style="left:798.05px;top:639.40px;width:2.00px;height:2.00px;background:#3a3a3a;border-radius:1px;"></div>
<div class="r" style="left:799.05px;top:642.60px;width:2.80px;height:3.20px;background:rgba(226,128,70,0.8);border-radius:1.2px;filter:blur(0.4px);"></div>
<div class="r" style="left:776.85px;top:645.40px;width:2.00px;height:1.20px;background:rgba(170,150,150,0.55);"></div>
<div class="r" style="left:781.45px;top:648.40px;width:5.00px;height:0.80px;background:rgba(225,205,190,0.6);"></div>
<div class="r" style="left:774.45px;top:632.40px;width:11.40px;height:8.20px;background:#585858;"></div>
<span class="t" style="left:776.25px;top:632px;font-size:7.0px;color:#e0e0e0;transform:scaleX(0.9504);">22</span>
<span class="t" style="left:788.45px;top:664px;font-size:7.8px;color:#e4e4e4;transform:scaleX(0.9407);">0,2</span>
<svg style="left:799.15px;top:666.8px" width="4.6" height="4.4" viewBox="0 0 4.6 4.4"><path d="M0.3 0.5 L2.3 3.6 L4.3 0.5" fill="none" stroke="#c4c4c4" stroke-width="0.85"/></svg>
<div class="r" style="left:810.50px;top:632.40px;width:29.40px;height:30.20px;background:#585858;"></div>
<div class="r" style="left:842.70px;top:629.00px;width:0.80px;height:46.60px;background:#484848;"></div>
<div class="r" style="left:811.10px;top:637.60px;width:28.40px;height:19.10px;background:#f4f4f4;"></div>
<div class="r" style="left:820.40px;top:638.00px;width:9.90px;height:6.60px;background:#15171d;"></div>
<div class="r" style="left:831.70px;top:638.20px;width:7.80px;height:10.20px;background:rgba(232,210,165,0.30);border-radius:2px;filter:blur(0.5px);"></div>
<div class="r" style="left:834.70px;top:639.40px;width:2.00px;height:2.00px;background:#3a3a3a;border-radius:1px;"></div>
<div class="r" style="left:835.70px;top:642.60px;width:2.80px;height:3.20px;background:rgba(226,126,70,0.8);border-radius:1.2px;filter:blur(0.4px);"></div>
<div class="r" style="left:813.50px;top:645.40px;width:2.00px;height:1.20px;background:rgba(170,150,150,0.55);"></div>
<div class="r" style="left:818.10px;top:648.40px;width:5.00px;height:0.80px;background:rgba(225,205,190,0.6);"></div>
<div class="r" style="left:811.10px;top:632.40px;width:11.40px;height:8.20px;background:#585858;"></div>
<span class="t" style="left:812.90px;top:632px;font-size:7.0px;color:#e0e0e0;transform:scaleX(0.9504);">23</span>
<span class="t" style="left:825.10px;top:664px;font-size:7.8px;color:#e4e4e4;transform:scaleX(0.9407);">0,2</span>
<svg style="left:835.80px;top:666.8px" width="4.6" height="4.4" viewBox="0 0 4.6 4.4"><path d="M0.3 0.5 L2.3 3.6 L4.3 0.5" fill="none" stroke="#c4c4c4" stroke-width="0.85"/></svg>
<div class="r" style="left:847.16px;top:632.40px;width:29.40px;height:30.20px;background:#585858;"></div>
<div class="r" style="left:879.36px;top:629.00px;width:0.80px;height:46.60px;background:#484848;"></div>
<div class="r" style="left:847.76px;top:637.60px;width:28.40px;height:19.10px;background:#f4f4f4;"></div>
<div class="r" style="left:857.06px;top:638.00px;width:9.90px;height:6.60px;background:#15171d;"></div>
<div class="r" style="left:868.36px;top:638.20px;width:7.80px;height:10.20px;background:rgba(232,210,165,0.30);border-radius:2px;filter:blur(0.5px);"></div>
<div class="r" style="left:871.36px;top:639.40px;width:2.00px;height:2.00px;background:#3a3a3a;border-radius:1px;"></div>
<div class="r" style="left:872.36px;top:642.60px;width:2.80px;height:3.20px;background:rgba(226,124,70,0.8);border-radius:1.2px;filter:blur(0.4px);"></div>
<div class="r" style="left:850.16px;top:645.40px;width:2.00px;height:1.20px;background:rgba(170,150,150,0.55);"></div>
<div class="r" style="left:854.76px;top:648.40px;width:5.00px;height:0.80px;background:rgba(225,205,190,0.6);"></div>
<div class="r" style="left:847.76px;top:632.40px;width:11.40px;height:8.20px;background:#585858;"></div>
<span class="t" style="left:849.56px;top:632px;font-size:7.0px;color:#e0e0e0;transform:scaleX(0.9504);">24</span>
<span class="t" style="left:861.76px;top:664px;font-size:7.8px;color:#e4e4e4;transform:scaleX(0.9407);">0,2</span>
<svg style="left:872.46px;top:666.8px" width="4.6" height="4.4" viewBox="0 0 4.6 4.4"><path d="M0.3 0.5 L2.3 3.6 L4.3 0.5" fill="none" stroke="#c4c4c4" stroke-width="0.85"/></svg>
<div class="r" style="left:883.82px;top:632.40px;width:29.40px;height:30.20px;background:#585858;"></div>
<div class="r" style="left:916.02px;top:629.00px;width:0.80px;height:46.60px;background:#484848;"></div>
<div class="r" style="left:884.42px;top:637.60px;width:28.40px;height:19.10px;background:#f4f4f4;"></div>
<div class="r" style="left:893.72px;top:638.00px;width:9.90px;height:6.60px;background:#15171d;"></div>
<div class="r" style="left:905.02px;top:638.20px;width:7.80px;height:10.20px;background:rgba(232,210,165,0.30);border-radius:2px;filter:blur(0.5px);"></div>
<div class="r" style="left:908.02px;top:639.40px;width:2.00px;height:2.00px;background:#3a3a3a;border-radius:1px;"></div>
<div class="r" style="left:909.02px;top:642.60px;width:2.80px;height:3.20px;background:rgba(226,122,70,0.8);border-radius:1.2px;filter:blur(0.4px);"></div>
<div class="r" style="left:886.82px;top:645.40px;width:2.00px;height:1.20px;background:rgba(170,150,150,0.55);"></div>
<div class="r" style="left:891.42px;top:648.40px;width:5.00px;height:0.80px;background:rgba(225,205,190,0.6);"></div>
<div class="r" style="left:884.42px;top:632.40px;width:11.40px;height:8.20px;background:#585858;"></div>
<span class="t" style="left:886.22px;top:632px;font-size:7.0px;color:#e0e0e0;transform:scaleX(0.9504);">25</span>
<span class="t" style="left:898.42px;top:664px;font-size:7.8px;color:#e4e4e4;transform:scaleX(0.9407);">0,2</span>
<svg style="left:909.12px;top:666.8px" width="4.6" height="4.4" viewBox="0 0 4.6 4.4"><path d="M0.3 0.5 L2.3 3.6 L4.3 0.5" fill="none" stroke="#c4c4c4" stroke-width="0.85"/></svg>
<div class="r" style="left:920.47px;top:632.40px;width:29.40px;height:30.20px;background:#585858;"></div>
<div class="r" style="left:952.67px;top:629.00px;width:0.80px;height:46.60px;background:#484848;"></div>
<div class="r" style="left:921.07px;top:637.60px;width:28.40px;height:19.10px;background:#f4f4f4;"></div>
<div class="r" style="left:930.37px;top:638.00px;width:9.90px;height:6.60px;background:#15171d;"></div>
<div class="r" style="left:941.67px;top:638.20px;width:7.80px;height:10.20px;background:rgba(232,210,165,0.30);border-radius:2px;filter:blur(0.5px);"></div>
<div class="r" style="left:944.67px;top:639.40px;width:2.00px;height:2.00px;background:#3a3a3a;border-radius:1px;"></div>
<div class="r" style="left:945.67px;top:642.60px;width:2.80px;height:3.20px;background:rgba(226,120,70,0.8);border-radius:1.2px;filter:blur(0.4px);"></div>
<div class="r" style="left:923.47px;top:645.40px;width:2.00px;height:1.20px;background:rgba(170,150,150,0.55);"></div>
<div class="r" style="left:928.07px;top:648.40px;width:5.00px;height:0.80px;background:rgba(225,205,190,0.6);"></div>
<div class="r" style="left:921.07px;top:632.40px;width:11.40px;height:8.20px;background:#585858;"></div>
<span class="t" style="left:922.87px;top:632px;font-size:7.0px;color:#e0e0e0;transform:scaleX(0.9504);">26</span>
<span class="t" style="left:935.07px;top:664px;font-size:7.8px;color:#e4e4e4;transform:scaleX(0.9407);">0,2</span>
<svg style="left:945.77px;top:666.8px" width="4.6" height="4.4" viewBox="0 0 4.6 4.4"><path d="M0.3 0.5 L2.3 3.6 L4.3 0.5" fill="none" stroke="#c4c4c4" stroke-width="0.85"/></svg>
<div class="r" style="left:957.13px;top:632.40px;width:29.40px;height:30.20px;background:#585858;"></div>
<div class="r" style="left:989.33px;top:629.00px;width:0.80px;height:46.60px;background:#484848;"></div>
<div class="r" style="left:957.73px;top:637.60px;width:28.40px;height:19.10px;background:#f4f4f4;"></div>
<div class="r" style="left:967.03px;top:638.00px;width:9.90px;height:6.60px;background:#15171d;"></div>
<div class="r" style="left:978.33px;top:638.20px;width:7.80px;height:10.20px;background:rgba(232,210,165,0.30);border-radius:2px;filter:blur(0.5px);"></div>
<div class="r" style="left:981.33px;top:639.40px;width:2.00px;height:2.00px;background:#3a3a3a;border-radius:1px;"></div>
<div class="r" style="left:982.33px;top:642.60px;width:2.80px;height:3.20px;background:rgba(226,120,70,0.8);border-radius:1.2px;filter:blur(0.4px);"></div>
<div class="r" style="left:960.13px;top:645.40px;width:2.00px;height:1.20px;background:rgba(170,150,150,0.55);"></div>
<div class="r" style="left:964.73px;top:648.40px;width:5.00px;height:0.80px;background:rgba(225,205,190,0.6);"></div>
<div class="r" style="left:957.73px;top:632.40px;width:11.40px;height:8.20px;background:#585858;"></div>
<span class="t" style="left:959.53px;top:632px;font-size:7.0px;color:#e0e0e0;transform:scaleX(0.9504);">27</span>
<span class="t" style="left:971.73px;top:664px;font-size:7.8px;color:#e4e4e4;transform:scaleX(0.9407);">0,2</span>
<svg style="left:982.43px;top:666.8px" width="4.6" height="4.4" viewBox="0 0 4.6 4.4"><path d="M0.3 0.5 L2.3 3.6 L4.3 0.5" fill="none" stroke="#c4c4c4" stroke-width="0.85"/></svg>
<div class="r" style="left:993.79px;top:632.40px;width:29.40px;height:30.20px;background:#585858;"></div>
<div class="r" style="left:1025.99px;top:629.00px;width:0.80px;height:46.60px;background:#484848;"></div>
<div class="r" style="left:994.39px;top:637.60px;width:28.40px;height:19.10px;background:#f4f4f4;"></div>
<div class="r" style="left:1003.69px;top:638.00px;width:9.90px;height:6.60px;background:#15171d;"></div>
<div class="r" style="left:1014.99px;top:638.20px;width:7.80px;height:10.20px;background:rgba(232,210,165,0.30);border-radius:2px;filter:blur(0.5px);"></div>
<div class="r" style="left:1017.99px;top:639.40px;width:2.00px;height:2.00px;background:#3a3a3a;border-radius:1px;"></div>
<div class="r" style="left:1018.99px;top:642.60px;width:2.80px;height:3.20px;background:rgba(226,120,70,0.8);border-radius:1.2px;filter:blur(0.4px);"></div>
<div class="r" style="left:996.79px;top:645.40px;width:2.00px;height:1.20px;background:rgba(170,150,150,0.55);"></div>
<div class="r" style="left:1001.39px;top:648.40px;width:5.00px;height:0.80px;background:rgba(225,205,190,0.6);"></div>
<div class="r" style="left:994.39px;top:632.40px;width:11.40px;height:8.20px;background:#585858;"></div>
<span class="t" style="left:996.19px;top:632px;font-size:7.0px;color:#e0e0e0;transform:scaleX(0.9504);">28</span>
<span class="t" style="left:1008.39px;top:664px;font-size:7.8px;color:#e4e4e4;transform:scaleX(0.9407);">0,2</span>
<svg style="left:1019.09px;top:666.8px" width="4.6" height="4.4" viewBox="0 0 4.6 4.4"><path d="M0.3 0.5 L2.3 3.6 L4.3 0.5" fill="none" stroke="#c4c4c4" stroke-width="0.85"/></svg>
<div class="r" style="left:1030.45px;top:632.40px;width:29.40px;height:30.20px;background:#585858;"></div>
<div class="r" style="left:1062.65px;top:629.00px;width:0.80px;height:46.60px;background:#484848;"></div>
<div class="r" style="left:1031.05px;top:637.60px;width:28.40px;height:19.10px;background:#f4f4f4;"></div>
<div class="r" style="left:1040.35px;top:638.00px;width:9.90px;height:6.60px;background:#15171d;"></div>
<div class="r" style="left:1051.65px;top:638.20px;width:7.80px;height:10.20px;background:rgba(232,210,165,0.30);border-radius:2px;filter:blur(0.5px);"></div>
<div class="r" style="left:1054.65px;top:639.40px;width:2.00px;height:2.00px;background:#3a3a3a;border-radius:1px;"></div>
<div class="r" style="left:1055.65px;top:642.60px;width:2.80px;height:3.20px;background:rgba(226,120,70,0.8);border-radius:1.2px;filter:blur(0.4px);"></div>
<div class="r" style="left:1033.45px;top:645.40px;width:2.00px;height:1.20px;background:rgba(170,150,150,0.55);"></div>
<div class="r" style="left:1038.05px;top:648.40px;width:5.00px;height:0.80px;background:rgba(225,205,190,0.6);"></div>
<div class="r" style="left:1031.05px;top:632.40px;width:11.40px;height:8.20px;background:#585858;"></div>
<span class="t" style="left:1032.85px;top:632px;font-size:7.0px;color:#e0e0e0;transform:scaleX(0.9504);">29</span>
<span class="t" style="left:1045.05px;top:664px;font-size:7.8px;color:#e4e4e4;transform:scaleX(0.9407);">0,2</span>
<svg style="left:1055.75px;top:666.8px" width="4.6" height="4.4" viewBox="0 0 4.6 4.4"><path d="M0.3 0.5 L2.3 3.6 L4.3 0.5" fill="none" stroke="#c4c4c4" stroke-width="0.85"/></svg>
<div class="r" style="left:1067.10px;top:632.40px;width:29.40px;height:30.20px;background:#585858;"></div>
<div class="r" style="left:1099.30px;top:629.00px;width:0.80px;height:46.60px;background:#484848;"></div>
<div class="r" style="left:1067.70px;top:637.60px;width:28.40px;height:19.10px;background:#f4f4f4;"></div>
<div class="r" style="left:1077.00px;top:638.00px;width:9.90px;height:6.60px;background:#15171d;"></div>
<div class="r" style="left:1088.30px;top:638.20px;width:7.80px;height:10.20px;background:rgba(232,210,165,0.30);border-radius:2px;filter:blur(0.5px);"></div>
<div class="r" style="left:1091.30px;top:639.40px;width:2.00px;height:2.00px;background:#3a3a3a;border-radius:1px;"></div>
<div class="r" style="left:1092.30px;top:642.60px;width:2.80px;height:3.20px;background:rgba(226,120,70,0.8);border-radius:1.2px;filter:blur(0.4px);"></div>
<div class="r" style="left:1070.10px;top:645.40px;width:2.00px;height:1.20px;background:rgba(170,150,150,0.55);"></div>
<div class="r" style="left:1074.70px;top:648.40px;width:5.00px;height:0.80px;background:rgba(225,205,190,0.6);"></div>
<div class="r" style="left:1067.70px;top:632.40px;width:11.40px;height:8.20px;background:#585858;"></div>
<span class="t" style="left:1069.50px;top:632px;font-size:7.0px;color:#e0e0e0;transform:scaleX(0.9504);">30</span>
<span class="t" style="left:1081.70px;top:664px;font-size:7.8px;color:#e4e4e4;transform:scaleX(0.9407);">0,2</span>
<svg style="left:1092.40px;top:666.8px" width="4.6" height="4.4" viewBox="0 0 4.6 4.4"><path d="M0.3 0.5 L2.3 3.6 L4.3 0.5" fill="none" stroke="#c4c4c4" stroke-width="0.85"/></svg>
<div class="r" style="left:1103.76px;top:632.40px;width:29.40px;height:30.20px;background:#585858;"></div>
<div class="r" style="left:1135.96px;top:629.00px;width:0.80px;height:46.60px;background:#484848;"></div>
<div class="r" style="left:1104.36px;top:637.60px;width:28.40px;height:19.10px;background:#f4f4f4;"></div>
<div class="r" style="left:1113.66px;top:638.00px;width:9.90px;height:6.60px;background:#15171d;"></div>
<div class="r" style="left:1124.96px;top:638.20px;width:7.80px;height:10.20px;background:rgba(232,210,165,0.30);border-radius:2px;filter:blur(0.5px);"></div>
<div class="r" style="left:1127.96px;top:639.40px;width:2.00px;height:2.00px;background:#3a3a3a;border-radius:1px;"></div>
<div class="r" style="left:1128.96px;top:642.60px;width:2.80px;height:3.20px;background:rgba(226,120,70,0.8);border-radius:1.2px;filter:blur(0.4px);"></div>
<div class="r" style="left:1106.76px;top:645.40px;width:2.00px;height:1.20px;background:rgba(170,150,150,0.55);"></div>
<div class="r" style="left:1111.36px;top:648.40px;width:5.00px;height:0.80px;background:rgba(225,205,190,0.6);"></div>
<div class="r" style="left:1104.36px;top:632.40px;width:11.40px;height:8.20px;background:#585858;"></div>
<span class="t" style="left:1106.16px;top:632px;font-size:7.0px;color:#e0e0e0;transform:scaleX(0.9504);">31</span>
<span class="t" style="left:1118.36px;top:664px;font-size:7.8px;color:#e4e4e4;transform:scaleX(0.9407);">0,2</span>
<svg style="left:1129.06px;top:666.8px" width="4.6" height="4.4" viewBox="0 0 4.6 4.4"><path d="M0.3 0.5 L2.3 3.6 L4.3 0.5" fill="none" stroke="#c4c4c4" stroke-width="0.85"/></svg>
<div class="r" style="left:1140.42px;top:632.40px;width:29.40px;height:30.20px;background:#585858;"></div>
<div class="r" style="left:1172.62px;top:629.00px;width:0.80px;height:46.60px;background:#484848;"></div>
<div class="r" style="left:1141.02px;top:637.60px;width:28.40px;height:19.10px;background:#f4f4f4;"></div>
<div class="r" style="left:1150.32px;top:638.00px;width:9.90px;height:6.60px;background:#15171d;"></div>
<div class="r" style="left:1161.62px;top:638.20px;width:7.80px;height:10.20px;background:rgba(232,210,165,0.30);border-radius:2px;filter:blur(0.5px);"></div>
<div class="r" style="left:1164.62px;top:639.40px;width:2.00px;height:2.00px;background:#3a3a3a;border-radius:1px;"></div>
<div class="r" style="left:1165.62px;top:642.60px;width:2.80px;height:3.20px;background:rgba(226,120,70,0.8);border-radius:1.2px;filter:blur(0.4px);"></div>
<div class="r" style="left:1143.42px;top:645.40px;width:2.00px;height:1.20px;background:rgba(170,150,150,0.55);"></div>
<div class="r" style="left:1148.02px;top:648.40px;width:5.00px;height:0.80px;background:rgba(225,205,190,0.6);"></div>
<div class="r" style="left:1141.02px;top:632.40px;width:11.40px;height:8.20px;background:#585858;"></div>
<span class="t" style="left:1142.82px;top:632px;font-size:7.0px;color:#e0e0e0;transform:scaleX(0.9504);">32</span>
<span class="t" style="left:1155.02px;top:664px;font-size:7.8px;color:#e4e4e4;transform:scaleX(0.9407);">0,2</span>
<svg style="left:1165.72px;top:666.8px" width="4.6" height="4.4" viewBox="0 0 4.6 4.4"><path d="M0.3 0.5 L2.3 3.6 L4.3 0.5" fill="none" stroke="#c4c4c4" stroke-width="0.85"/></svg>
<div class="r" style="left:1177.07px;top:632.40px;width:29.40px;height:30.20px;background:#585858;"></div>
<div class="r" style="left:1209.27px;top:629.00px;width:0.80px;height:46.60px;background:#484848;"></div>
<div class="r" style="left:1177.67px;top:637.60px;width:28.40px;height:19.10px;background:#f4f4f4;"></div>
<div class="r" style="left:1186.97px;top:638.00px;width:9.90px;height:6.60px;background:#15171d;"></div>
<div class="r" style="left:1198.27px;top:638.20px;width:7.80px;height:10.20px;background:rgba(232,210,165,0.30);border-radius:2px;filter:blur(0.5px);"></div>
<div class="r" style="left:1201.27px;top:639.40px;width:2.00px;height:2.00px;background:#3a3a3a;border-radius:1px;"></div>
<div class="r" style="left:1202.27px;top:642.60px;width:2.80px;height:3.20px;background:rgba(226,120,70,0.8);border-radius:1.2px;filter:blur(0.4px);"></div>
<div class="r" style="left:1180.07px;top:645.40px;width:2.00px;height:1.20px;background:rgba(170,150,150,0.55);"></div>
<div class="r" style="left:1184.67px;top:648.40px;width:5.00px;height:0.80px;background:rgba(225,205,190,0.6);"></div>
<div class="r" style="left:1177.67px;top:632.40px;width:11.40px;height:8.20px;background:#585858;"></div>
<span class="t" style="left:1179.47px;top:632px;font-size:7.0px;color:#e0e0e0;transform:scaleX(0.9504);">33</span>
<span class="t" style="left:1191.67px;top:664px;font-size:7.8px;color:#e4e4e4;transform:scaleX(0.9407);">0,2</span>
<svg style="left:1202.37px;top:666.8px" width="4.6" height="4.4" viewBox="0 0 4.6 4.4"><path d="M0.3 0.5 L2.3 3.6 L4.3 0.5" fill="none" stroke="#c4c4c4" stroke-width="0.85"/></svg>
<div class="r" style="left:1213.73px;top:632.40px;width:29.40px;height:30.20px;background:#585858;"></div>
<div class="r" style="left:1245.93px;top:629.00px;width:0.80px;height:46.60px;background:#484848;"></div>
<div class="r" style="left:1214.33px;top:637.60px;width:28.40px;height:19.10px;background:#f4f4f4;"></div>
<div class="r" style="left:1223.63px;top:638.00px;width:9.90px;height:6.60px;background:#15171d;"></div>
<div class="r" style="left:1234.93px;top:638.20px;width:7.80px;height:10.20px;background:rgba(232,210,165,0.30);border-radius:2px;filter:blur(0.5px);"></div>
<div class="r" style="left:1237.93px;top:639.40px;width:2.00px;height:2.00px;background:#3a3a3a;border-radius:1px;"></div>
<div class="r" style="left:1238.93px;top:642.60px;width:2.80px;height:3.20px;background:rgba(226,120,70,0.8);border-radius:1.2px;filter:blur(0.4px);"></div>
<div class="r" style="left:1216.73px;top:645.40px;width:2.00px;height:1.20px;background:rgba(170,150,150,0.55);"></div>
<div class="r" style="left:1221.33px;top:648.40px;width:5.00px;height:0.80px;background:rgba(225,205,190,0.6);"></div>
<div class="r" style="left:1214.33px;top:632.40px;width:11.40px;height:8.20px;background:#585858;"></div>
<span class="t" style="left:1216.13px;top:632px;font-size:7.0px;color:#e0e0e0;transform:scaleX(0.9504);">34</span>
<span class="t" style="left:1228.33px;top:664px;font-size:7.8px;color:#e4e4e4;transform:scaleX(0.9407);">0,2</span>
<svg style="left:1239.03px;top:666.8px" width="4.6" height="4.4" viewBox="0 0 4.6 4.4"><path d="M0.3 0.5 L2.3 3.6 L4.3 0.5" fill="none" stroke="#c4c4c4" stroke-width="0.85"/></svg>
<div class="r" style="left:1250.39px;top:632.40px;width:29.40px;height:30.20px;background:#585858;"></div>
<div class="r" style="left:1282.59px;top:629.00px;width:0.80px;height:46.60px;background:#484848;"></div>
<div class="r" style="left:1250.99px;top:637.60px;width:28.40px;height:19.10px;background:#f4f4f4;"></div>
<div class="r" style="left:1260.29px;top:638.00px;width:9.90px;height:6.60px;background:#15171d;"></div>
<div class="r" style="left:1271.59px;top:638.20px;width:7.80px;height:10.20px;background:rgba(232,210,165,0.30);border-radius:2px;filter:blur(0.5px);"></div>
<div class="r" style="left:1274.59px;top:639.40px;width:2.00px;height:2.00px;background:#3a3a3a;border-radius:1px;"></div>
<div class="r" style="left:1275.59px;top:642.60px;width:2.80px;height:3.20px;background:rgba(226,120,70,0.8);border-radius:1.2px;filter:blur(0.4px);"></div>
<div class="r" style="left:1253.39px;top:645.40px;width:2.00px;height:1.20px;background:rgba(170,150,150,0.55);"></div>
<div class="r" style="left:1257.99px;top:648.40px;width:5.00px;height:0.80px;background:rgba(225,205,190,0.6);"></div>
<div class="r" style="left:1250.99px;top:632.40px;width:11.40px;height:8.20px;background:#585858;"></div>
<span class="t" style="left:1252.79px;top:632px;font-size:7.0px;color:#e0e0e0;transform:scaleX(0.9504);">35</span>
<span class="t" style="left:1264.99px;top:664px;font-size:7.8px;color:#e4e4e4;transform:scaleX(0.9407);">0,2</span>
<svg style="left:1275.69px;top:666.8px" width="4.6" height="4.4" viewBox="0 0 4.6 4.4"><path d="M0.3 0.5 L2.3 3.6 L4.3 0.5" fill="none" stroke="#c4c4c4" stroke-width="0.85"/></svg>
<div class="r" style="left:0.00px;top:675.60px;width:1280.00px;height:0.80px;background:#474747;"></div>
<div class="r" style="left:0.00px;top:676.40px;width:1280.00px;height:17.00px;background:#4e4e4e;"></div>
<svg style="left:0px;top:676px" width="220" height="17" viewBox="0 0 220 17">
<g fill="#828282">
<rect x="6" y="4" width="1.3" height="8"/><rect x="8.6" y="3" width="1.3" height="9"/><rect x="11" y="4.6" width="3.8" height="1.2"/><rect x="11" y="7.4" width="3.8" height="1.2"/><rect x="11" y="10.2" width="3.8" height="1.2"/>
<path d="M61.6 6 H67.4 L64.5 9.6 Z" fill="#9a9a9a"/>
<rect x="75.8" y="5" width="1.2" height="6"/><path d="M82.8 5 V11 L77.6 8 Z"/>
<path d="M100 5 V11 L94.6 8 Z"/><rect x="100.8" y="5" width="1.2" height="6"/>
<path d="M116 4.6 V11.4 L122 8 Z" fill="#929292"/>
<rect x="134.4" y="5" width="1.2" height="6"/><path d="M136.6 5 V11 L142 8 Z"/>
</g>
<path d="M154.5 5.5 L161 10.6" stroke="#777" stroke-width="1.6"/>
<path d="M175 5 H179.5 V11.5 H173.5 V9" fill="none" stroke="#828282" stroke-width="1"/>
<rect x="192.6" y="6" width="5.4" height="6" fill="none" stroke="#828282" stroke-width="1"/><rect x="191.8" y="4.4" width="7" height="1" fill="#828282"/><rect x="194.2" y="3.4" width="2.2" height="1" fill="#828282"/>
<path d="M213.6 5.6 L211.4 8 L213.6 10.4" fill="none" stroke="#7e7e7e" stroke-width="0.9"/>
</svg>
<div class="r" style="left:20.00px;top:677.00px;width:0.80px;height:16.00px;background:#464646;"></div>
<div class="r" style="left:69.20px;top:677.00px;width:0.80px;height:16.00px;background:#464646;"></div>
<div class="r" style="left:146.60px;top:677.00px;width:0.80px;height:16.00px;background:#464646;"></div>
<div class="r" style="left:205.60px;top:677.00px;width:0.80px;height:16.00px;background:#464646;"></div>
<span class="t" style="left:23.90px;top:678px;font-size:7.0px;color:#707070;transform:scaleX(0.8763);">Na zawsze</span>
<div class="r" style="left:207.00px;top:676.40px;width:1073.00px;height:17.00px;background:#4b4b4b;"></div>
<div class="r" style="left:218.00px;top:676.60px;width:622.00px;height:14.60px;background:#6a6a6a;"></div>
<svg style="left:1257px;top:682px" width="4" height="6" viewBox="0 0 4 6"><path d="M0.6 0.6 L3 3 L0.6 5.4" fill="none" stroke="#7e7e7e" stroke-width="0.9"/></svg>
<svg style="left:211px;top:681.4px" width="4" height="6" viewBox="0 0 4 6"><path d="M3.2 0.6 L0.8 3 L3.2 5.4" fill="none" stroke="#7e7e7e" stroke-width="0.9"/></svg>
<div class="r" style="left:0.00px;top:693.40px;width:1280.00px;height:26.60px;background:#0a0b0f;"></div>
<div class="r" style="left:163.80px;top:693.40px;width:31.20px;height:26.60px;background:#33363b;"></div>
<div class="r" style="left:100.00px;top:718.60px;width:28.00px;height:1.40px;background:#82bdec;"></div>
<div class="r" style="left:133.00px;top:718.60px;width:27.00px;height:1.40px;background:#82bdec;"></div>
<div class="r" style="left:163.80px;top:718.60px;width:31.20px;height:1.40px;background:#82bdec;"></div>
<div class="r" style="left:264.00px;top:718.60px;width:26.60px;height:1.40px;background:#82bdec;"></div>
<div class="r" style="left:296.00px;top:718.60px;width:27.00px;height:1.40px;background:#82bdec;"></div>
<div class="r" style="left:328.80px;top:718.60px;width:27.20px;height:1.40px;background:#82bdec;"></div>
<div class="r" style="left:362.00px;top:718.60px;width:27.00px;height:1.40px;background:#82bdec;"></div>
<svg style="left:0px;top:693.4px" width="400" height="26.6" viewBox="0 0 400 26.6">
<!-- windows logo -->
<g fill="#ffffff"><path d="M10.5 9.6 L14.9 9 V13 H10.5 Z M15.6 8.9 L21.3 8.1 V13 H15.6 Z M10.5 13.7 H14.9 V17.7 L10.5 17.1 Z M15.6 13.7 H21.3 V18.6 L15.6 17.8 Z"/></g>
<!-- search -->
<circle cx="49.8" cy="11.6" r="3.6" fill="none" stroke="#fff" stroke-width="1.2"/><path d="M47.2 14.4 L42.8 18.8" stroke="#fff" stroke-width="1.3"/>
<!-- task view -->
<rect x="76" y="9.4" width="8" height="8.4" fill="none" stroke="#fff" stroke-width="1.1"/><path d="M74.8 10.8 H73.4 V16.4 H74.8 M85.2 10.8 H86.6 V16.4 H85.2" fill="none" stroke="#fff" stroke-width="1"/>
<!-- chrome -->
<circle cx="114" cy="13.4" r="7.2" fill="#db4437"/>
<path d="M114 13.4 L107.8 17 A7.2 7.2 0 0 0 114.2 20.6 L117.6 14.6 Z" fill="#0f9d58"/>
<path d="M114 13.4 L117.6 14.8 L114.2 20.6 A7.2 7.2 0 0 0 120.3 9.8 H114 Z" fill="#ffcd40"/>
<circle cx="114" cy="13.4" r="3.3" fill="#fff"/><circle cx="114" cy="13.4" r="2.6" fill="#4285f4"/>
<!-- explorer -->
<path d="M139.4 8 H144.6 L146 9.6 H152.8 V19.4 H139.4 Z" fill="#f3cd5f"/><rect x="139.4" y="11" width="13.4" height="8.4" fill="#fbe38c"/><rect x="142.2" y="14.4" width="7.8" height="5" fill="#5aa9e6"/><rect x="144" y="16.6" width="4.2" height="2.8" fill="#fbe38c"/>
<!-- Ps -->
<rect x="172.6" y="6.8" width="13.4" height="13" fill="#0a1f2c" stroke="#2b8fd2" stroke-width="0.9"/>
<!-- Lr -->
<rect x="205.2" y="6.8" width="13.4" height="13" fill="#0c2433" stroke="#9cc3d8" stroke-width="0.9"/>
<!-- mail -->
<path d="M236.6 10.8 L244.8 6.8 L253 10.8 V19.4 H236.6 Z" fill="#fff"/><path d="M238 11.6 H252 L246.6 16.4 Z" fill="#0a0b0f"/><path d="M244 13.4 L251.6 18.2" stroke="#fff" stroke-width="0.9"/>
<!-- spotify -->
<circle cx="277.4" cy="13.2" r="7.6" fill="#1ed760"/><path d="M272.8 10.6 C276 9.6 279.8 9.9 282.4 11.4 M273.4 13.4 C276 12.6 279.2 12.9 281.4 14.2 M274 16 C276 15.4 278.6 15.6 280.4 16.7" fill="none" stroke="#0a0b0f" stroke-width="1.3" stroke-linecap="round"/>
<!-- photos -->
<rect x="302.9" y="6.6" width="14.4" height="13.6" fill="#0a0b0f" stroke="#fff" stroke-width="1"/><path d="M303.2 20 V17.6 L307.6 11 L310.4 15.2 L312.6 12.8 L317 17.8 V20 Z" fill="#fff"/>
<!-- evernote -->
<rect x="335.4" y="6" width="14.4" height="14.6" rx="1.6" fill="#5fb336"/><path d="M340 9 H345.6 C346.6 9.6 346.6 15 345.8 17.6 H343.8 V15.4 H341.8 C340 15.4 339.2 13.6 339.2 11.4 Z" fill="#2a3a22"/>
<!-- notepad -->
<path d="M370.4 7.6 L381.6 6.2 L383.6 17.8 L372 20.4 Z" fill="#e6f3fb"/><path d="M370.4 7.6 L381.6 6.2 L382 8.4 L370.8 10 Z" fill="#7cc3ea"/><path d="M372 20.4 L368.2 17.2 L370.4 7.6 Z" fill="#a9cde0"/>
</svg>
<svg style="left:1125px;top:693.4px" width="155" height="26.6" viewBox="0 0 155 26.6">
<g fill="none" stroke="#fff" stroke-width="1">
<circle cx="13.4" cy="10" r="1.9"/><path d="M10.2 16.4 C10.2 13 16.6 13 16.6 16.4"/><circle cx="9.6" cy="13.6" r="1.5"/><path d="M7 19 C7 16.2 12.2 16.2 12.2 19"/>
<path d="M32 15.4 L35.6 11.8 L39.2 15.4"/>
<rect x="46.4" y="9.4" width="8.6" height="6"/><path d="M47.4 18.4 H50.4 M48.8 15.4 V18.4"/><rect x="52.4" y="14.2" width="4.4" height="4.6" fill="#fff" stroke="none"/>
<path d="M62 11.8 H64 L67 9 V18.6 L64 15.8 H62 Z"/><path d="M68.8 11.4 C70 12.6 70 15 68.8 16.2 M70.6 9.8 C72.6 12 72.6 15.6 70.6 17.8" stroke-width="0.8"/>
</g>
<path d="M128.4 8.4 H141.4 V17.4 H135 L132 20.4 V17.4 H128.4 Z" fill="#fff"/><path d="M130.4 11 H139.4 M130.4 13.2 H139.4 M130.4 15.2 H136" stroke="#0a0b0f" stroke-width="0.8"/>
<circle cx="140.6" cy="17.4" r="3.9" fill="#0a0b0f" stroke="#fff" stroke-width="0.9"/>
</svg>
<span class="t" style="left:175.20px;top:701px;font-size:8.6px;color:#37a1ea;transform:scaleX(0.8967);">Ps</span>
<span class="t" style="left:208.20px;top:701px;font-size:8.6px;color:#b9def0;transform:scaleX(0.9677);">Lr</span>
<span class="t" style="left:1264.00px;top:706px;font-size:6.4px;color:#ffffff;font-weight:bold;transform:scaleX(0.9552);">2</span>
<span class="t" style="left:1213.20px;top:695px;font-size:8.6px;color:#ffffff;transform:scaleX(0.8410);">20:00</span>
<span class="t" style="left:1205.00px;top:706px;font-size:8.6px;color:#ffffff;transform:scaleX(0.8271);">01.01.2018</span>
<div class="r" style="left:334.20px;top:123.80px;width:611.00px;height:306.60px;background:rgba(0,0,0,0);box-shadow:0 1px 5px rgba(0,0,0,0.3);"></div>
<div class="r" style="left:334.20px;top:123.80px;width:611.00px;height:306.60px;background:#535353;border:1px solid #3a658f;"></div>
<div class="r" style="left:335.00px;top:124.60px;width:609.40px;height:20.80px;background:#ffffff;"></div>
<div class="r" style="left:334.20px;top:123.80px;width:611.00px;height:0.90px;background:#86add2;"></div>
<div class="r" style="left:944.30px;top:123.80px;width:0.90px;height:21.60px;background:#7ea4c9;"></div>
<div class="r" style="left:334.20px;top:123.80px;width:0.90px;height:21.60px;background:#7ea4c9;"></div>
<span class="t" style="left:340.00px;top:129px;font-size:8.6px;color:#111111;transform:scaleX(0.9113);">Renderowanie wideo</span>
<svg style="left:930.4px;top:130.2px" width="9" height="9" viewBox="0 0 9 9"><path d="M1 1 L8 8 M8 1 L1 8" stroke="#1a1a1a" stroke-width="1" fill="none"/></svg>
<div class="r" style="left:342.60px;top:156.40px;width:533.80px;height:66.00px;background:transparent;border:0.8px solid #484848;box-shadow:inset 0.7px 0.7px 0 rgba(255,255,255,0.045), 0.7px 0.7px 0 rgba(255,255,255,0.045);"></div>
<div class="r" style="left:354.00px;top:154.40px;width:40.50px;height:4.00px;background:#535353;"></div>
<span class="t" style="left:357.00px;top:151px;font-size:8.6px;color:#d8d8d8;transform:scaleX(0.9133);">Położenie</span>
<span class="t" style="left:349.50px;top:167px;font-size:8.6px;color:#d8d8d8;transform:scaleX(0.8997);">Nazwa:</span>
<div class="r" style="left:384.00px;top:167.40px;width:135.00px;height:11.40px;background:#454545;border:0.7px solid #3c3c3c;border-radius:1px;"></div>
<span class="t" style="left:386.60px;top:167px;font-size:8.6px;color:#e4e4e4;transform:scaleX(0.9664);">stop-motion.mp4</span>
<div class="r" style="left:349.50px;top:186.20px;width:80.30px;height:12.00px;background:#454545;border-radius:1.6px;"></div>
<span class="t" style="left:360.00px;top:186px;font-size:8.6px;color:#e6e6e6;transform:scaleX(0.9792);">Wybierz folder...</span>
<span class="t" style="left:438.30px;top:186px;font-size:8.6px;color:#cfcfcf;transform:scaleX(0.9696);">C:\Users\Agnes\Documents\</span>
<div class="r" style="left:349.00px;top:207.00px;width:7.40px;height:7.00px;background:#505050;border:0.8px solid #8d8d8d;border-radius:1px;"></div>
<span class="t" style="left:361.50px;top:205px;font-size:8.6px;color:#d8d8d8;transform:scaleX(0.9659);">Utwórz nowy podfolder:</span>
<div class="r" style="left:462.80px;top:205.40px;width:133.00px;height:11.00px;background:#4d4d4d;border:0.6px solid #484848;border-radius:1px;"></div>
<div class="r" style="left:342.60px;top:235.20px;width:532.80px;height:109.20px;background:transparent;border:0.8px solid #484848;box-shadow:inset 0.7px 0.7px 0 rgba(255,255,255,0.045), 0.7px 0.7px 0 rgba(255,255,255,0.045);"></div>
<div class="r" style="left:353.00px;top:233.00px;width:138.00px;height:5.00px;background:#535353;"></div>
<div class="r" style="left:356.00px;top:230.00px;width:131.80px;height:12.00px;background:#454545;border-radius:1.4px;"></div>
<span class="t" style="left:361.00px;top:230px;font-size:8.6px;color:#e4e4e4;transform:scaleX(0.9459);">Adobe Media Encoder</span>
<svg style="left:480.80px;top:234.70px" width="5.2" height="3.6" viewBox="0 0 5.2 3.6"><path d="M0.4 0.5 L2.6 2.8 L4.8 0.5" fill="none" stroke="#c4c4c4" stroke-width="0.85"/></svg>
<span class="t" style="left:409.70px;top:250px;font-size:8.6px;color:#d8d8d8;transform:scaleX(0.9519);">Format:</span>
<div class="r" style="left:442.40px;top:250.40px;width:164.20px;height:11.90px;background:#454545;border-radius:1.4px;"></div>
<span class="t" style="left:448.30px;top:251px;font-size:8.6px;color:#e4e4e4;transform:scaleX(0.9325);">H.264</span>
<svg style="left:599.60px;top:255.05px" width="5.2" height="3.6" viewBox="0 0 5.2 3.6"><path d="M0.4 0.5 L2.6 2.8 L4.8 0.5" fill="none" stroke="#c4c4c4" stroke-width="0.85"/></svg>
<span class="t" style="left:620.00px;top:250px;font-size:8.6px;color:#d8d8d8;transform:scaleX(0.9719);">Ustawienia domyślne:</span>
<div class="r" style="left:704.20px;top:249.80px;width:165.60px;height:13.00px;background:#3b3b3b;border:1px solid #2f6fb0;border-radius:1.4px;"></div>
<span class="t" style="left:710.80px;top:250px;font-size:8.6px;color:#ededed;transform:scaleX(0.9603);">Wysoka jakość</span>
<svg style="left:862.40px;top:255.00px" width="5.2" height="3.6" viewBox="0 0 5.2 3.6"><path d="M0.4 0.5 L2.6 2.8 L4.8 0.5" fill="none" stroke="#d0d0d0" stroke-width="0.85"/></svg>
<span class="t" style="left:405.30px;top:270px;font-size:8.6px;color:#d8d8d8;transform:scaleX(0.9475);">Rozmiar:</span>
<div class="r" style="left:442.40px;top:269.70px;width:189.40px;height:11.90px;background:#454545;border-radius:1.4px;"></div>
<span class="t" style="left:448.30px;top:270px;font-size:8.6px;color:#e4e4e4;transform:scaleX(0.9525);">Rozmiar dokumentu</span>
<svg style="left:624.80px;top:274.35px" width="5.2" height="3.6" viewBox="0 0 5.2 3.6"><path d="M0.4 0.5 L2.6 2.8 L4.8 0.5" fill="none" stroke="#c4c4c4" stroke-width="0.85"/></svg>
<div class="r" style="left:638.90px;top:269.80px;width:33.60px;height:11.70px;background:#454545;border:0.7px solid #3c3c3c;border-radius:1px;"></div>
<span class="t" style="left:641.90px;top:270px;font-size:8.6px;color:#e4e4e4;transform:scaleX(0.9774);">4096</span>
<span class="t" style="left:680.00px;top:270px;font-size:8.6px;color:#d8d8d8;transform:scaleX(1.0233);">x</span>
<div class="r" style="left:692.40px;top:269.80px;width:33.60px;height:11.70px;background:#454545;border:0.7px solid #3c3c3c;border-radius:1px;"></div>
<span class="t" style="left:695.40px;top:270px;font-size:8.6px;color:#e4e4e4;transform:scaleX(0.9774);">2304</span>
<span class="t" style="left:355.70px;top:289px;font-size:8.6px;color:#d8d8d8;transform:scaleX(0.9346);">Szybkość odtwarzania:</span>
<div class="r" style="left:442.40px;top:289.60px;width:156.70px;height:11.30px;background:#454545;border-radius:1.4px;"></div>
<span class="t" style="left:448.30px;top:289px;font-size:8.6px;color:#e4e4e4;transform:scaleX(0.9555);">Szybkość odtwarzania dokumentu</span>
<svg style="left:592.10px;top:293.95px" width="5.2" height="3.6" viewBox="0 0 5.2 3.6"><path d="M0.4 0.5 L2.6 2.8 L4.8 0.5" fill="none" stroke="#c4c4c4" stroke-width="0.85"/></svg>
<div class="r" style="left:606.30px;top:289.70px;width:38.60px;height:11.10px;background:#454545;border:0.7px solid #3c3c3c;border-radius:1px;"></div>
<span class="t" style="left:608.80px;top:289px;font-size:8.6px;color:#e4e4e4;transform:scaleX(0.9722);">30</span>
<span class="t" style="left:652.60px;top:289px;font-size:8.6px;color:#d8d8d8;transform:scaleX(1.0072);">kl./s</span>
<span class="t" style="left:386.00px;top:309px;font-size:8.6px;color:#d8d8d8;transform:scaleX(0.9693);">Kolejność pól:</span>
<div class="r" style="left:442.40px;top:308.90px;width:164.20px;height:11.30px;background:#454545;border-radius:1.4px;"></div>
<span class="t" style="left:448.30px;top:309px;font-size:8.6px;color:#e4e4e4;transform:scaleX(0.9520);">Ustawienie predefiniowane (progresyw...</span>
<svg style="left:599.60px;top:313.25px" width="5.2" height="3.6" viewBox="0 0 5.2 3.6"><path d="M0.4 0.5 L2.6 2.8 L4.8 0.5" fill="none" stroke="#c4c4c4" stroke-width="0.85"/></svg>
<span class="t" style="left:620.50px;top:309px;font-size:8.6px;color:#d8d8d8;transform:scaleX(0.9465);">Proporcje:</span>
<div class="r" style="left:663.00px;top:308.90px;width:97.00px;height:11.30px;background:#454545;border-radius:1.4px;"></div>
<span class="t" style="left:668.60px;top:309px;font-size:8.6px;color:#e4e4e4;transform:scaleX(0.9536);">Dokument (1,0)</span>
<svg style="left:441.4px;top:330.6px" width="8.4" height="8.4" viewBox="0 0 8.4 8.4"><rect width="8.4" height="8.4" rx="1" fill="#ebebeb"/><path d="M1.8 4.3 L3.6 6.1 L6.8 2.1" fill="none" stroke="#2e2e2e" stroke-width="1.3"/></svg>
<span class="t" style="left:454.30px;top:329px;font-size:8.6px;color:#d8d8d8;transform:scaleX(0.9572);">Zarządzanie kolorami</span>
<div class="r" style="left:342.80px;top:357.80px;width:287.40px;height:63.00px;background:transparent;border:0.8px solid #484848;box-shadow:inset 0.7px 0.7px 0 rgba(255,255,255,0.045), 0.7px 0.7px 0 rgba(255,255,255,0.045);"></div>
<div class="r" style="left:354.20px;top:355.80px;width:29.70px;height:4.00px;background:#535353;"></div>
<span class="t" style="left:357.20px;top:352px;font-size:8.6px;color:#d8d8d8;transform:scaleX(0.9017);">Zakres</span>
<svg style="left:348.6px;top:369.2px" width="8.8" height="8.8" viewBox="0 0 8.8 8.8"><circle cx="4.4" cy="4.4" r="3.2" fill="#2e2e2e" stroke="#f0f0f0" stroke-width="1.9"/></svg>
<span class="t" style="left:361.60px;top:368px;font-size:8.6px;color:#e6e6e6;transform:scaleX(0.9541);">Wszystkie klatki</span>
<div class="r" style="left:349.60px;top:406.40px;width:7.20px;height:7.20px;background:#4e4e4e;border-radius:50%;"></div>
<span class="t" style="left:361.60px;top:404px;font-size:8.6px;color:#727272;transform:scaleX(0.9684);">Obecnie wybrane klatki</span>
<div class="r" style="left:637.40px;top:357.80px;width:122.60px;height:63.00px;background:transparent;border:0.8px solid #484848;border-right:none;box-shadow:inset 0.7px 0.7px 0 rgba(255,255,255,0.045), 0.7px 0.7px 0 rgba(255,255,255,0.045);"></div>
<div class="r" style="left:647.80px;top:355.80px;width:92.20px;height:4.00px;background:#535353;"></div>
<span class="t" style="left:650.80px;top:352px;font-size:8.6px;color:#d8d8d8;transform:scaleX(0.9688);">Opcje renderowania</span>
<span class="t" style="left:650.80px;top:368px;font-size:8.6px;color:#727272;transform:scaleX(0.9460);">Kanał Alfa:</span>
<div class="r" style="left:694.70px;top:368.40px;width:65.30px;height:11.40px;background:#4c4c4c;border-radius:1.4px;"></div>
<span class="t" style="left:700.00px;top:368px;font-size:8.6px;color:#707070;transform:scaleX(1.0179);">Brak</span>
<span class="t" style="left:650.80px;top:385px;font-size:8.6px;color:#d8d8d8;transform:scaleX(0.9145);">Jakość 3D:</span>
<div class="r" style="left:694.70px;top:385.40px;width:65.30px;height:11.40px;background:#454545;border-radius:1.4px;"></div>
<span class="t" style="left:699.60px;top:385px;font-size:8.6px;color:#e4e4e4;transform:scaleX(0.9927);">Interaktywna</span>
<span class="t" style="left:644.90px;top:402px;font-size:8.6px;color:#727272;transform:scaleX(0.9479);">Próg wysokiej jakości promieniowania:</span>
<div class="r" style="left:887.00px;top:155.80px;width:51.00px;height:18.20px;background:#535353;border:1.1px solid #d2d2d2;border-radius:9.2px;"></div>
<span class="t" style="left:895.60px;top:159px;font-size:8.6px;color:#ececec;transform:scaleX(0.9799);">Renderuj</span>
<div class="r" style="left:887.00px;top:179.00px;width:51.00px;height:18.20px;background:#535353;border:0.9px solid #707070;border-radius:9.2px;"></div>
<span class="t" style="left:901.00px;top:182px;font-size:8.6px;color:#ececec;transform:scaleX(0.9788);">Anuluj</span>
<div class="r" style="left:704.20px;top:263.20px;width:255.20px;height:346.40px;background:#ffffff;border:0.9px solid #5c95cb;border-bottom:1px solid #3e88d0;"></div>
<div class="r" style="left:705.00px;top:263.80px;width:253.60px;height:9.33px;background:#0a78d7;"></div>
<span class="t" style="left:707.80px;top:263px;font-size:8.6px;color:#ffffff;transform:scaleX(0.9219);">Wysoka jakość</span>
<span class="t" style="left:707.80px;top:272px;font-size:8.6px;color:#101010;transform:scaleX(0.9147);">Średnia jakość</span>
<span class="t" style="left:707.80px;top:281px;font-size:8.6px;color:#101010;transform:scaleX(0.8804);">Niska jakość</span>
<span class="t" style="left:707.80px;top:291px;font-size:8.6px;color:#101010;transform:scaleX(0.9744);">Telefon z systemem Android - 320x240 29,97</span>
<span class="t" style="left:707.80px;top:300px;font-size:8.6px;color:#101010;transform:scaleX(0.9609);">Telefon z systemem Android - 360p szeroki ekran 29,97</span>
<span class="t" style="left:707.80px;top:309px;font-size:8.6px;color:#101010;transform:scaleX(0.9787);">Telefon i tablet z systemem Android - 480p 29,97</span>
<span class="t" style="left:707.80px;top:319px;font-size:8.6px;color:#101010;transform:scaleX(0.9649);">Telefon i tablet z systemem Android - 480p szeroki ekran 29,97</span>
<span class="t" style="left:707.80px;top:328px;font-size:8.6px;color:#101010;transform:scaleX(0.9736);">Tablet z systemem Android - 720p 29,97</span>
<span class="t" style="left:707.80px;top:337px;font-size:8.6px;color:#101010;transform:scaleX(0.9719);">Tablet z systemem Android - 1080p 29,97</span>
<span class="t" style="left:707.80px;top:347px;font-size:8.6px;color:#101010;transform:scaleX(0.9535);">Apple iPhone, iPod - 320x240 24</span>
<span class="t" style="left:707.80px;top:356px;font-size:8.6px;color:#101010;transform:scaleX(0.9471);">Apple TV, iPad, iPhone 3G i nowsze - 360p szeroki ekran 24</span>
<span class="t" style="left:707.80px;top:365px;font-size:8.6px;color:#101010;transform:scaleX(0.9643);">Apple TV, iPad, iPhone 4 i nowsze - 720p 29,97</span>
<span class="t" style="left:707.80px;top:375px;font-size:8.6px;color:#101010;transform:scaleX(0.9412);">HD 720p 24</span>
<span class="t" style="left:707.80px;top:384px;font-size:8.6px;color:#101010;transform:scaleX(0.9412);">HD 720p 25</span>
<span class="t" style="left:707.80px;top:393px;font-size:8.6px;color:#101010;transform:scaleX(0.9541);">HD 720p 29,97</span>
<span class="t" style="left:707.80px;top:403px;font-size:8.6px;color:#101010;transform:scaleX(0.9598);">HD 1080i 25 (1.33 PAR)</span>
<span class="t" style="left:707.80px;top:412px;font-size:8.6px;color:#101010;transform:scaleX(0.9391);">HD 1080i 25</span>
<span class="t" style="left:707.80px;top:421px;font-size:8.6px;color:#101010;transform:scaleX(0.9629);">HD 1080i 29,97 (1.33 PAR)</span>
<span class="t" style="left:707.80px;top:431px;font-size:8.6px;color:#101010;transform:scaleX(0.9437);">HD 1080i 29,97</span>
<span class="t" style="left:707.80px;top:440px;font-size:8.6px;color:#101010;transform:scaleX(0.9645);">HD 1080p 24 (1.33 PAR)</span>
<span class="t" style="left:707.80px;top:449px;font-size:8.6px;color:#101010;transform:scaleX(0.9431);">HD 1080p 24</span>
<span class="t" style="left:707.80px;top:459px;font-size:8.6px;color:#101010;transform:scaleX(0.9471);">HD 1080p 25</span>
<span class="t" style="left:707.80px;top:468px;font-size:8.6px;color:#101010;transform:scaleX(0.9547);">HD 1080p 29,97</span>
<span class="t" style="left:707.80px;top:477px;font-size:8.6px;color:#101010;transform:scaleX(0.9066);">NTSC DV 24p</span>
<span class="t" style="left:707.80px;top:487px;font-size:8.6px;color:#101010;transform:scaleX(0.9119);">NTSC DV szeroki ekran 24p</span>
<span class="t" style="left:707.80px;top:496px;font-size:8.6px;color:#101010;transform:scaleX(0.9162);">NTSC DV Szerokoekranowy</span>
<span class="t" style="left:707.80px;top:505px;font-size:8.6px;color:#101010;transform:scaleX(0.8636);">NTSC DV</span>
<span class="t" style="left:707.80px;top:515px;font-size:8.6px;color:#101010;transform:scaleX(0.9138);">PAL DV szeroki ekran</span>
<span class="t" style="left:707.80px;top:524px;font-size:8.6px;color:#101010;transform:scaleX(0.8908);">PAL DV</span>
<span class="t" style="left:707.80px;top:533px;font-size:8.6px;color:#101010;transform:scaleX(0.9488);">Vimeo HD 720p 25</span>
<span class="t" style="left:707.80px;top:543px;font-size:8.6px;color:#101010;transform:scaleX(0.9519);">Vimeo HD 720p 29,97</span>
<span class="t" style="left:707.80px;top:552px;font-size:8.6px;color:#101010;transform:scaleX(0.9546);">Vimeo HD 1080p 29,97</span>
<span class="t" style="left:707.80px;top:561px;font-size:8.6px;color:#101010;transform:scaleX(0.9310);">Vimeo SD szeroki ekran 29,97</span>
<span class="t" style="left:707.80px;top:571px;font-size:8.6px;color:#101010;transform:scaleX(0.9770);">YouTube HD 720p 25</span>
<span class="t" style="left:707.80px;top:580px;font-size:8.6px;color:#101010;transform:scaleX(0.9762);">YouTube HD 720p 29,97</span>
<span class="t" style="left:707.80px;top:589px;font-size:8.6px;color:#101010;transform:scaleX(0.9755);">YouTube HD 1080p 29,97</span>
<span class="t" style="left:707.80px;top:599px;font-size:8.6px;color:#101010;transform:scaleX(0.9545);">YouTube SD 360p szeroki ekran 29,97</span>
</div></body></html>
